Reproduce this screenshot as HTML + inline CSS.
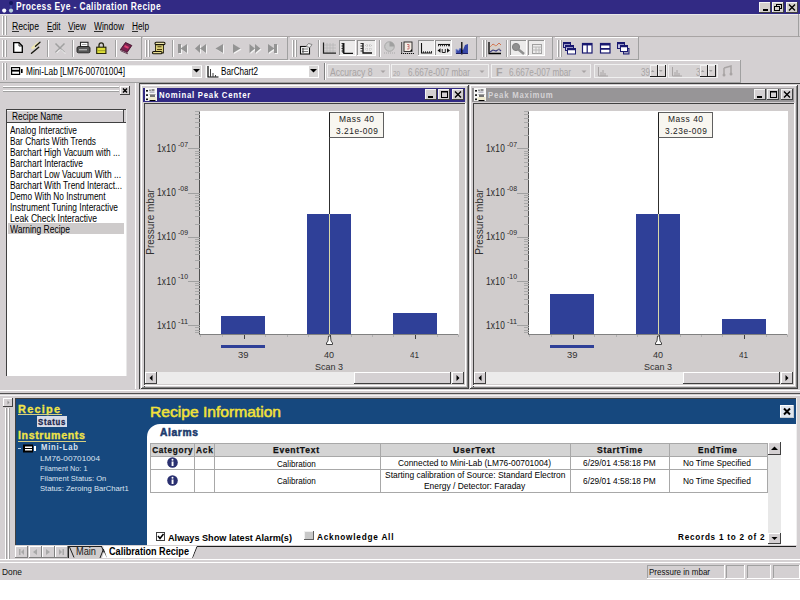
<!DOCTYPE html>
<html><head><meta charset="utf-8">
<style>
*{margin:0;padding:0;box-sizing:border-box}
html,body{width:800px;height:600px;overflow:hidden;background:#fff}
.a{position:absolute}
.t{position:absolute;white-space:nowrap;line-height:1}
</style></head><body>
<div class="a" style="left:0px;top:0px;width:800px;height:580px;background:#d4d0d2;"></div>
<div class="a" style="left:0px;top:0px;width:800px;height:14px;background:#322a84;"></div>
<svg class="a" style="left:0px;top:0px" width="15" height="14" viewBox="0 0 15 14"><circle cx="11" cy="3" r="2" fill="#141860"/><circle cx="11" cy="6.5" r="1.2" fill="#3848a0"/><circle cx="4.2" cy="10.6" r="2.1" fill="#f8f8ff"/><circle cx="11" cy="10.6" r="2.1" fill="#b8d0dc"/></svg>
<div class="t" id="t3" style="left:16px;top:2.28px;font-size:10.3px;font-weight:bold;color:#fff;font-family:'Liberation Sans',sans-serif;transform:scaleX(0.8201);transform-origin:0 0;letter-spacing:0.5px;">Process Eye - Calibration Recipe</div>
<div class="a" style="left:759px;top:2px;width:12px;height:11px;background:#d4d0cc;"></div>
<div class="a" style="left:759px;top:2px;width:12px;height:1px;background:#f4f4f4;"></div>
<div class="a" style="left:759px;top:2px;width:1px;height:11px;background:#f4f4f4;"></div>
<div class="a" style="left:759px;top:12px;width:12px;height:1px;background:#404040;"></div>
<div class="a" style="left:770px;top:2px;width:1px;height:11px;background:#404040;"></div>
<div class="a" style="left:772px;top:2px;width:12px;height:11px;background:#d4d0cc;"></div>
<div class="a" style="left:772px;top:2px;width:12px;height:1px;background:#f4f4f4;"></div>
<div class="a" style="left:772px;top:2px;width:1px;height:11px;background:#f4f4f4;"></div>
<div class="a" style="left:772px;top:12px;width:12px;height:1px;background:#404040;"></div>
<div class="a" style="left:783px;top:2px;width:1px;height:11px;background:#404040;"></div>
<div class="a" style="left:786px;top:2px;width:12px;height:11px;background:#d4d0cc;"></div>
<div class="a" style="left:786px;top:2px;width:12px;height:1px;background:#f4f4f4;"></div>
<div class="a" style="left:786px;top:2px;width:1px;height:11px;background:#f4f4f4;"></div>
<div class="a" style="left:786px;top:12px;width:12px;height:1px;background:#404040;"></div>
<div class="a" style="left:797px;top:2px;width:1px;height:11px;background:#404040;"></div>
<svg class="a" style="left:759px;top:2px" width="40" height="11" viewBox="0 0 40 11"><rect x="4" y="7" width="5" height="2" fill="#000"/><rect x="17.5" y="2.5" width="5" height="4" fill="none" stroke="#000" stroke-width="1"/><rect x="15.5" y="4.5" width="5" height="4" fill="#d4d0cc" stroke="#000" stroke-width="1"/><path d="M30 2.5 L36 8.5 M36 2.5 L30 8.5" stroke="#000" stroke-width="1.4"/></svg>
<div class="a" style="left:0px;top:14px;width:800px;height:1px;background:#e8e8e8;"></div>
<div class="a" style="left:0px;top:36px;width:800px;height:1px;background:#a8a4a4;"></div>
<div class="a" style="left:798px;top:14px;width:1px;height:23px;background:#a0a0a0;"></div>
<div class="a" style="left:2px;top:16px;width:1px;height:19px;background:#ffffff;"></div>
<div class="a" style="left:3px;top:16px;width:1px;height:19px;background:#a0a0a0;"></div>
<div class="a" style="left:5px;top:16px;width:1px;height:19px;background:#ffffff;"></div>
<div class="a" style="left:6px;top:16px;width:1px;height:19px;background:#a0a0a0;"></div>
<div class="t" id="t27" style="left:12px;top:21.93px;font-size:10px;font-weight:normal;color:#000;font-family:'Liberation Sans',sans-serif;transform:scaleX(0.8670);transform-origin:0 0;">Recipe</div>
<div class="t" id="t28" style="left:47px;top:21.93px;font-size:10px;font-weight:normal;color:#000;font-family:'Liberation Sans',sans-serif;transform:scaleX(0.7833);transform-origin:0 0;">Edit</div>
<div class="t" id="t29" style="left:68px;top:21.93px;font-size:10px;font-weight:normal;color:#000;font-family:'Liberation Sans',sans-serif;transform:scaleX(0.8372);transform-origin:0 0;">View</div>
<div class="t" id="t30" style="left:94px;top:21.93px;font-size:10px;font-weight:normal;color:#000;font-family:'Liberation Sans',sans-serif;transform:scaleX(0.8432);transform-origin:0 0;">Window</div>
<div class="t" id="t31" style="left:132px;top:21.93px;font-size:10px;font-weight:normal;color:#000;font-family:'Liberation Sans',sans-serif;transform:scaleX(0.8261);transform-origin:0 0;">Help</div>
<div class="a" style="left:12px;top:31px;width:7px;height:1px;background:#303030;"></div>
<div class="a" style="left:47px;top:31px;width:6px;height:1px;background:#303030;"></div>
<div class="a" style="left:68px;top:31px;width:6px;height:1px;background:#303030;"></div>
<div class="a" style="left:94px;top:31px;width:9px;height:1px;background:#303030;"></div>
<div class="a" style="left:132px;top:31px;width:6px;height:1px;background:#303030;"></div>
<div class="a" style="left:0px;top:37px;width:141px;height:1px;background:#ffffff;"></div>
<div class="a" style="left:0px;top:59px;width:141px;height:1px;background:#a0a0a0;"></div>
<div class="a" style="left:141px;top:37px;width:1px;height:23px;background:#a0a0a0;"></div>
<div class="a" style="left:2px;top:40px;width:1px;height:17px;background:#ffffff;"></div>
<div class="a" style="left:3px;top:40px;width:1px;height:17px;background:#a0a0a0;"></div>
<div class="a" style="left:5px;top:40px;width:1px;height:17px;background:#ffffff;"></div>
<div class="a" style="left:6px;top:40px;width:1px;height:17px;background:#a0a0a0;"></div>
<div class="a" style="left:143px;top:37px;width:144px;height:1px;background:#ffffff;"></div>
<div class="a" style="left:143px;top:59px;width:144px;height:1px;background:#a0a0a0;"></div>
<div class="a" style="left:287px;top:37px;width:1px;height:23px;background:#a0a0a0;"></div>
<div class="a" style="left:145px;top:40px;width:1px;height:17px;background:#ffffff;"></div>
<div class="a" style="left:146px;top:40px;width:1px;height:17px;background:#a0a0a0;"></div>
<div class="a" style="left:148px;top:40px;width:1px;height:17px;background:#ffffff;"></div>
<div class="a" style="left:149px;top:40px;width:1px;height:17px;background:#a0a0a0;"></div>
<div class="a" style="left:290px;top:37px;width:186px;height:1px;background:#ffffff;"></div>
<div class="a" style="left:290px;top:59px;width:186px;height:1px;background:#a0a0a0;"></div>
<div class="a" style="left:476px;top:37px;width:1px;height:23px;background:#a0a0a0;"></div>
<div class="a" style="left:292px;top:40px;width:1px;height:17px;background:#ffffff;"></div>
<div class="a" style="left:293px;top:40px;width:1px;height:17px;background:#a0a0a0;"></div>
<div class="a" style="left:295px;top:40px;width:1px;height:17px;background:#ffffff;"></div>
<div class="a" style="left:296px;top:40px;width:1px;height:17px;background:#a0a0a0;"></div>
<div class="a" style="left:480px;top:37px;width:72px;height:1px;background:#ffffff;"></div>
<div class="a" style="left:480px;top:59px;width:72px;height:1px;background:#a0a0a0;"></div>
<div class="a" style="left:552px;top:37px;width:1px;height:23px;background:#a0a0a0;"></div>
<div class="a" style="left:482px;top:40px;width:1px;height:17px;background:#ffffff;"></div>
<div class="a" style="left:483px;top:40px;width:1px;height:17px;background:#a0a0a0;"></div>
<div class="a" style="left:485px;top:40px;width:1px;height:17px;background:#ffffff;"></div>
<div class="a" style="left:486px;top:40px;width:1px;height:17px;background:#a0a0a0;"></div>
<div class="a" style="left:555px;top:37px;width:83px;height:1px;background:#ffffff;"></div>
<div class="a" style="left:555px;top:59px;width:83px;height:1px;background:#a0a0a0;"></div>
<div class="a" style="left:638px;top:37px;width:1px;height:23px;background:#a0a0a0;"></div>
<div class="a" style="left:557px;top:40px;width:1px;height:17px;background:#ffffff;"></div>
<div class="a" style="left:558px;top:40px;width:1px;height:17px;background:#a0a0a0;"></div>
<div class="a" style="left:560px;top:40px;width:1px;height:17px;background:#ffffff;"></div>
<div class="a" style="left:561px;top:40px;width:1px;height:17px;background:#a0a0a0;"></div>
<div class="a" style="left:47px;top:40px;width:1px;height:17px;background:#a0a0a0;"></div>
<div class="a" style="left:48px;top:40px;width:1px;height:17px;background:#ffffff;"></div>
<div class="a" style="left:72px;top:40px;width:1px;height:17px;background:#a0a0a0;"></div>
<div class="a" style="left:73px;top:40px;width:1px;height:17px;background:#ffffff;"></div>
<div class="a" style="left:115px;top:40px;width:1px;height:17px;background:#a0a0a0;"></div>
<div class="a" style="left:116px;top:40px;width:1px;height:17px;background:#ffffff;"></div>
<div class="a" style="left:172px;top:40px;width:1px;height:17px;background:#a0a0a0;"></div>
<div class="a" style="left:173px;top:40px;width:1px;height:17px;background:#ffffff;"></div>
<div class="a" style="left:318px;top:40px;width:1px;height:17px;background:#a0a0a0;"></div>
<div class="a" style="left:319px;top:40px;width:1px;height:17px;background:#ffffff;"></div>
<div class="a" style="left:379px;top:40px;width:1px;height:17px;background:#a0a0a0;"></div>
<div class="a" style="left:380px;top:40px;width:1px;height:17px;background:#ffffff;"></div>
<div class="a" style="left:506px;top:40px;width:1px;height:17px;background:#a0a0a0;"></div>
<div class="a" style="left:507px;top:40px;width:1px;height:17px;background:#ffffff;"></div>
<svg class="a" style="left:13px;top:42px" width="10" height="11" viewBox="0 0 10 11"><path d="M0.7 0.7 H6 L9.3 4 V10.3 H0.7Z" fill="#fff" stroke="#000" stroke-width="1.3"/><path d="M6 0.7 V4 H9.3" fill="none" stroke="#000" stroke-width="0.8"/></svg>
<svg class="a" style="left:28px;top:40px" width="16" height="16" viewBox="0 0 16 16"><path d="M4.5 8 L10 3.5" stroke="#efe6b0" stroke-width="2.6" stroke-linecap="round"/><path d="M12 2.3 L7.5 6.2" stroke="#181810" stroke-width="1.3" stroke-linecap="round"/><path d="M10.7 7.2 L3.5 13.3" stroke="#181810" stroke-width="1.4" stroke-linecap="round"/></svg>
<svg class="a" style="left:54px;top:42px" width="12" height="12" viewBox="0 0 12 12"><path d="M1.5 1.5 L10.5 10.5 M10.5 1.5 L1.5 10.5" stroke="#a0a0a0" stroke-width="1.5"/><path d="M2.5 11 L6 7.5 M7 7.5 L11 11.5" stroke="#fff" stroke-width="1"/></svg>
<svg class="a" style="left:76px;top:41px" width="15" height="13" viewBox="0 0 15 13"><rect x="4.5" y="1.3" width="7.5" height="4.5" fill="#fff" stroke="#282828" stroke-width="1.1"/><path d="M6 3.5 H10.5" stroke="#909090" stroke-width="0.8"/><path d="M1 7 Q1 5.5 3 5.5 H12 Q14 5.5 14 7 V10.5 Q14 11.8 12.5 11.8 H2.5 Q1 11.8 1 10.5Z" fill="#585858" stroke="#202020" stroke-width="0.9"/><rect x="3" y="8" width="8" height="1.4" fill="#a8a8a8"/></svg>
<svg class="a" style="left:96px;top:42px" width="11" height="12" viewBox="0 0 11 12"><path d="M3 5.5 V3.2 Q3 0.9 5.2 0.9 Q7.5 0.9 7.5 3.2 V5.5" fill="none" stroke="#282818" stroke-width="1.3"/><rect x="0.7" y="5.2" width="9.2" height="6.4" fill="#dede38" stroke="#202008" stroke-width="1.1"/><rect x="1.5" y="8" width="7.5" height="1.2" fill="#a8a828"/></svg>
<svg class="a" style="left:119px;top:41px" width="14" height="14" viewBox="0 0 14 14"><path d="M1.5 8.5 L6.5 1.5 L12.8 4.5 L8 11.5Z" fill="#7a2050" stroke="#401028" stroke-width="0.9"/><path d="M1.5 8.5 L8 11.5 L8.5 12.8 L1.8 9.8Z" fill="#f0e0f0" stroke="#401028" stroke-width="0.7"/><path d="M5.5 5 L9.5 6.8" stroke="#e04070" stroke-width="2"/></svg>
<svg class="a" style="left:151px;top:41px" width="16" height="14" viewBox="0 0 16 14"><rect x="4.5" y="2.5" width="8" height="9.5" fill="#dcd078" stroke="#282410" stroke-width="0.9"/><rect x="4" y="1.2" width="10" height="2.4" rx="1.2" fill="#f0e8a8" stroke="#181408" stroke-width="1.1"/><rect x="1.5" y="10.5" width="9.5" height="2.3" rx="1.1" fill="#e8dc90" stroke="#181408" stroke-width="1.1"/><path d="M6.5 5.8 H10.5 M6 8.5 H11" stroke="#504010" stroke-width="1.1"/></svg>
<svg class="a" style="left:178px;top:43.5px" width="101" height="11" viewBox="0 0 101 11"><g fill="#f4f4f4" transform="translate(1,1)"><rect x="0" y="0" width="3" height="9"/><path d="M9 0 V9 L2.5 4.5Z"/><path d="M22 0 V9 L17 4.5Z M28 0 V9 L22 4.5Z"/><path d="M45 0 V9 L37.5 4.5Z"/><path d="M55 0 V9 L62.5 4.5Z"/><path d="M71.5 0 V9 L77 4.5Z M77 0 V9 L82.5 4.5Z"/><path d="M90 0 V9 L96.5 4.5Z"/><rect x="96" y="0" width="3" height="9"/></g><g fill="#949494"><rect x="0" y="0" width="3" height="9"/><path d="M9 0 V9 L2.5 4.5Z"/><path d="M22 0 V9 L17 4.5Z M28 0 V9 L22 4.5Z"/><path d="M45 0 V9 L37.5 4.5Z"/><path d="M55 0 V9 L62.5 4.5Z"/><path d="M71.5 0 V9 L77 4.5Z M77 0 V9 L82.5 4.5Z"/><path d="M90 0 V9 L96.5 4.5Z"/><rect x="96" y="0" width="3" height="9"/></g></svg>
<svg class="a" style="left:299px;top:42px" width="14" height="13" viewBox="0 0 14 13"><rect x="1.5" y="4.5" width="9" height="7.5" fill="#f8f8f8" stroke="#101010" stroke-width="1.1"/><path d="M3 7 H9 M3 9.5 H9" stroke="#808080"/><path d="M4 6 V11" stroke="#404040"/><path d="M7 4.5 L9.5 1.5 L13 2.5 L11 5.5Z" fill="#f0f0f0" stroke="#707070" stroke-width="0.8"/></svg>
<svg class="a" style="left:322px;top:42px" width="15" height="12" viewBox="0 0 15 12"><g stroke="#b8b8b8" stroke-width="0.8"><path d="M2 3 H14 M2 6 H14 M2 9 H14 M5 1 V11 M8 1 V11 M11 1 V11"/></g><path d="M1.5 0.5 V11.2 H14" fill="none" stroke="#202020" stroke-width="1.2"/></svg>
<div class="a" style="left:339px;top:40px;width:17px;height:16px;background:#ecebeb;"></div>
<div class="a" style="left:339px;top:40px;width:17px;height:1px;background:#909090;"></div>
<div class="a" style="left:339px;top:40px;width:1px;height:16px;background:#909090;"></div>
<div class="a" style="left:339px;top:55px;width:17px;height:1px;background:#ffffff;"></div>
<div class="a" style="left:355px;top:40px;width:1px;height:16px;background:#ffffff;"></div>
<svg class="a" style="left:339px;top:40px" width="17" height="16" viewBox="0 0 17 16"><path d="M4.8 3 V13.3 H14" fill="none" stroke="#101010" stroke-width="1.2"/><path d="M4.3 3 V13" stroke="#101010" stroke-width="1.6"/><path d="M2.5 3.5 H5 M2.5 6 H5 M2.5 8.5 H5 M2.5 11 H5" stroke="#202020" stroke-width="0.9"/></svg>
<div class="a" style="left:357px;top:40px;width:19px;height:16px;background:#ecebeb;"></div>
<div class="a" style="left:357px;top:40px;width:19px;height:1px;background:#909090;"></div>
<div class="a" style="left:357px;top:40px;width:1px;height:16px;background:#909090;"></div>
<div class="a" style="left:357px;top:55px;width:19px;height:1px;background:#ffffff;"></div>
<div class="a" style="left:375px;top:40px;width:1px;height:16px;background:#ffffff;"></div>
<svg class="a" style="left:357px;top:40px" width="19" height="16" viewBox="0 0 19 16"><path d="M6 3 V13 H15" fill="none" stroke="#101010" stroke-width="1.3"/><path d="M3.5 3.5 H6 M3.5 6 H6 M3.5 8.5 H6 M3.5 11 H6" stroke="#202020" stroke-width="0.9"/><g stroke="#b8b8b8" stroke-width="0.8" stroke-dasharray="1 1"><path d="M8 5.5 H15 M8 9 H15 M10 4 V12 M13 4 V12"/></g></svg>
<svg class="a" style="left:383px;top:41px" width="14" height="13" viewBox="0 0 14 13"><circle cx="6.5" cy="5.5" r="4.8" fill="#c8c8c8" stroke="#a8a8a8"/><path d="M6.5 5.5 V0.7 A4.8 4.8 0 0 1 11.3 5.5Z" fill="#a0a0a0"/><path d="M1 12 H13" stroke="#a8a8a8" stroke-dasharray="1 1"/></svg>
<svg class="a" style="left:400px;top:41px" width="15" height="14" viewBox="0 0 15 14"><rect x="1" y="1" width="1.2" height="11" fill="#606060"/><rect x="4" y="1" width="8" height="9.5" fill="#f4ece4" stroke="#202020" stroke-width="0.9"/><path d="M7 3.5 H9 V5.5 H7.5 M9 5.5 V8 H7" fill="none" stroke="#c06060" stroke-width="0.8"/><path d="M10 10 L12 8 V10Z" fill="#000"/><path d="M1 12.5 H14" stroke="#101010" stroke-width="1.1" stroke-dasharray="1.2 0.8"/></svg>
<div class="a" style="left:418px;top:40px;width:17px;height:16px;background:#ecebeb;"></div>
<div class="a" style="left:418px;top:40px;width:17px;height:1px;background:#909090;"></div>
<div class="a" style="left:418px;top:40px;width:1px;height:16px;background:#909090;"></div>
<div class="a" style="left:418px;top:55px;width:17px;height:1px;background:#ffffff;"></div>
<div class="a" style="left:434px;top:40px;width:1px;height:16px;background:#ffffff;"></div>
<svg class="a" style="left:418px;top:40px" width="17" height="16" viewBox="0 0 17 16"><path d="M3.5 3 V13 H14" fill="none" stroke="#101010" stroke-width="1.1"/><path d="M5.5 13 V11.3 M7.5 13 V11.3 M9.5 13 V11.3 M11.5 13 V11.3 M13.5 13 V11" stroke="#202020" stroke-width="0.9"/></svg>
<div class="a" style="left:435px;top:40px;width:17px;height:16px;background:#ecebeb;"></div>
<div class="a" style="left:435px;top:40px;width:17px;height:1px;background:#909090;"></div>
<div class="a" style="left:435px;top:40px;width:1px;height:16px;background:#909090;"></div>
<div class="a" style="left:435px;top:55px;width:17px;height:1px;background:#ffffff;"></div>
<div class="a" style="left:451px;top:40px;width:1px;height:16px;background:#ffffff;"></div>
<svg class="a" style="left:435px;top:40px" width="17" height="16" viewBox="0 0 17 16"><path d="M3 4.5 H15" stroke="#101010" stroke-width="1.1"/><path d="M3.5 4.5 V6.3 M5.5 4.5 V6.3 M7.5 4.5 V6.3 M9.5 4.5 V6.3 M11.5 4.5 V6.3 M13.5 4.5 V6.3 M14.5 4.5 V6.3" stroke="#202020" stroke-width="0.9"/><path d="M2.5 10.5 L5.5 8.2 V12.8Z M15 10.5 L12 8.2 V12.8Z" fill="#101010"/><path d="M7.2 9 V12.5 H10.3 V9" fill="none" stroke="#101010" stroke-width="0.9"/></svg>
<svg class="a" style="left:455px;top:41px" width="14" height="14" viewBox="0 0 14 14"><path d="M1 12.5 V8 L3.5 9.5 L5 7 L8 9 L10 4 L13 3 V12.5Z" fill="#3848a8"/><path d="M1 12.5 V8 L3.5 9.5 L5 7" fill="none" stroke="#8090d0" stroke-width="0.8"/><path d="M6.8 1 V13.5" stroke="#000" stroke-width="1.3"/><path d="M1 12.5 H13" stroke="#202060" stroke-width="1"/></svg>
<svg class="a" style="left:487px;top:41px" width="15" height="14" viewBox="0 0 15 14"><path d="M2 1 V12.5 H14" fill="none" stroke="#000" stroke-width="1.3"/><path d="M3 6 L6 3 L9 5 L12 2 L14 4" fill="none" stroke="#d07050" stroke-width="1"/><path d="M3 11 L6 9 L9 10 L12 8 L14 10" fill="none" stroke="#404080" stroke-width="1.2"/><path d="M3 5 H14 M3 8 H14" stroke="#e0d0b0" stroke-width="0.6"/></svg>
<div class="a" style="left:510px;top:40px;width:17px;height:16px;background:#ecebeb;"></div>
<div class="a" style="left:510px;top:40px;width:17px;height:1px;background:#909090;"></div>
<div class="a" style="left:510px;top:40px;width:1px;height:16px;background:#909090;"></div>
<div class="a" style="left:510px;top:55px;width:17px;height:1px;background:#ffffff;"></div>
<div class="a" style="left:526px;top:40px;width:1px;height:16px;background:#ffffff;"></div>
<svg class="a" style="left:510px;top:40px" width="17" height="16" viewBox="0 0 17 16"><circle cx="6" cy="7" r="3.6" fill="#909090" stroke="#808080"/><path d="M8.5 9.5 L14 14" stroke="#909090" stroke-width="2.5"/></svg>
<div class="a" style="left:528px;top:40px;width:17px;height:16px;background:#ecebeb;"></div>
<div class="a" style="left:528px;top:40px;width:17px;height:1px;background:#909090;"></div>
<div class="a" style="left:528px;top:40px;width:1px;height:16px;background:#909090;"></div>
<div class="a" style="left:528px;top:55px;width:17px;height:1px;background:#ffffff;"></div>
<div class="a" style="left:544px;top:40px;width:1px;height:16px;background:#ffffff;"></div>
<svg class="a" style="left:528px;top:40px" width="17" height="16" viewBox="0 0 17 16"><rect x="4.5" y="4.5" width="9" height="9" fill="none" stroke="#a0a0a0"/><path d="M4.5 7 H13.5 M4.5 10 H13.5 M8 7 V13.5 M11 7 V13.5" stroke="#b8b8b8"/></svg>
<svg class="a" style="left:562px;top:41px" width="14" height="14" viewBox="0 0 14 14"><rect x="1.5" y="1.5" width="7" height="5" fill="#c0c0e0" stroke="#1a1a70"/><rect x="3.5" y="4.5" width="8" height="5" fill="#c8c8e8" stroke="#1a1a70"/><rect x="5.5" y="7.5" width="8" height="5.5" fill="#fff" stroke="#1a1a70"/><path d="M1.5 2.5 H8.5 M3.5 5.5 H11.5 M5.5 8.5 H13.5" stroke="#1a1a70" stroke-width="1.6"/></svg>
<svg class="a" style="left:581px;top:42px" width="12" height="12" viewBox="0 0 12 12"><rect x="1.5" y="1.5" width="9.5" height="9.5" fill="#fff" stroke="#1a1a70" stroke-width="1.2"/><path d="M1.5 2.5 H11" stroke="#1a1a70" stroke-width="1.8"/><path d="M6.2 1.5 V11" stroke="#1a1a70" stroke-width="1.2"/></svg>
<svg class="a" style="left:599px;top:42px" width="12" height="12" viewBox="0 0 12 12"><rect x="1.5" y="1.5" width="9.5" height="9.5" fill="#fff" stroke="#1a1a70" stroke-width="1.2"/><path d="M1.5 2.5 H11 M1.5 6.8 H11" stroke="#1a1a70" stroke-width="1.8"/></svg>
<svg class="a" style="left:616px;top:41px" width="14" height="14" viewBox="0 0 14 14"><rect x="1.5" y="1.5" width="7" height="6" fill="#c0c0e0" stroke="#1a1a70"/><rect x="7.5" y="7.5" width="5.5" height="5.5" fill="#a0a0c0" stroke="#1a1a70"/><rect x="4.5" y="4.5" width="7" height="6" fill="#fff" stroke="#1a1a70"/><path d="M1.5 2.5 H8.5 M4.5 5.5 H11.5" stroke="#1a1a70" stroke-width="1.4"/></svg>
<div class="a" style="left:0px;top:60px;width:740px;height:1px;background:#ffffff;"></div>
<div class="a" style="left:0px;top:82px;width:740px;height:1px;background:#a0a0a0;"></div>
<div class="a" style="left:740px;top:60px;width:1px;height:23px;background:#a0a0a0;"></div>
<div class="a" style="left:2px;top:63px;width:1px;height:17px;background:#ffffff;"></div>
<div class="a" style="left:3px;top:63px;width:1px;height:17px;background:#a0a0a0;"></div>
<div class="a" style="left:5px;top:63px;width:1px;height:17px;background:#ffffff;"></div>
<div class="a" style="left:6px;top:63px;width:1px;height:17px;background:#a0a0a0;"></div>
<div class="a" style="left:324px;top:63px;width:1px;height:17px;background:#808080;"></div>
<div class="a" style="left:325px;top:63px;width:1px;height:17px;background:#ffffff;"></div>
<div class="a" style="left:10px;top:65px;width:192px;height:13px;background:#fff;"></div>
<div class="a" style="left:10px;top:65px;width:192px;height:1px;background:#f0f0f0;"></div>
<div class="a" style="left:10px;top:65px;width:1px;height:13px;background:#e8e8e8;"></div>
<div class="a" style="left:192px;top:66px;width:9px;height:11px;background:#d8d6d6;"></div>
<svg class="a" style="left:192px;top:68px" width="9" height="5" viewBox="0 0 9 5"><path d="M1 1 L8 1 L4.5 4.5Z" fill="#000"/></svg>
<svg class="a" style="left:11px;top:67px" width="13" height="9" viewBox="0 0 13 9"><rect x="0.6" y="0.6" width="8" height="6.8" fill="#fff" stroke="#000" stroke-width="1.2"/><rect x="1" y="2.8" width="7.5" height="1.8" fill="#000"/><rect x="1.5" y="1.3" width="6.5" height="1" fill="#d0d0d0"/><rect x="10" y="2" width="1.6" height="4" fill="#000"/></svg>
<div class="t" id="t155" style="left:26px;top:67.44px;font-size:10px;font-weight:normal;color:#000;font-family:'Liberation Sans',sans-serif;transform:scaleX(0.8282);transform-origin:0 0;">Mini-Lab [LM76-00701004]</div>
<div class="a" style="left:205px;top:65px;width:114px;height:13px;background:#fff;"></div>
<div class="a" style="left:205px;top:65px;width:114px;height:1px;background:#f0f0f0;"></div>
<div class="a" style="left:205px;top:65px;width:1px;height:13px;background:#e8e8e8;"></div>
<div class="a" style="left:309px;top:66px;width:9px;height:11px;background:#d8d6d6;"></div>
<svg class="a" style="left:309px;top:68px" width="9" height="5" viewBox="0 0 9 5"><path d="M1 1 L8 1 L4.5 4.5Z" fill="#000"/></svg>
<svg class="a" style="left:206px;top:65px" width="13" height="13" viewBox="0 0 13 13"><path d="M2 1 V12 H12.5" stroke="#000" stroke-width="1.2" fill="none"/><path d="M4.5 12 V4 M7 12 V8 M9.5 12 V10" stroke="#404040" stroke-width="1" fill="none"/></svg>
<div class="t" id="t162" style="left:221px;top:67.44px;font-size:10px;font-weight:normal;color:#000;font-family:'Liberation Sans',sans-serif;transform:scaleX(0.8118);transform-origin:0 0;">BarChart2</div>
<div class="a" style="left:327px;top:64px;width:63px;height:14px;background:#d6d3d4;"></div>
<div class="a" style="left:327px;top:64px;width:63px;height:1px;background:#f0f0f0;"></div>
<div class="a" style="left:327px;top:64px;width:1px;height:14px;background:#f0f0f0;"></div>
<div class="a" style="left:327px;top:77px;width:63px;height:1px;background:#f0f0f0;"></div>
<div class="a" style="left:389px;top:64px;width:1px;height:14px;background:#f0f0f0;"></div>
<svg class="a" style="left:380px;top:70px" width="6" height="4" viewBox="0 0 6 4"><path d="M0.5 0.5 L5.5 0.5 L3 3Z" fill="#a8a4a4"/></svg>
<div class="t" id="t169" style="left:330px;top:67.53px;font-size:10px;font-weight:normal;color:#a8a4a4;font-family:'Liberation Sans',sans-serif;transform:scaleX(0.8591);transform-origin:0 0;">Accuracy 8</div>
<div class="a" style="left:391px;top:64px;width:98px;height:14px;background:#d6d3d4;"></div>
<div class="a" style="left:391px;top:64px;width:98px;height:1px;background:#f0f0f0;"></div>
<div class="a" style="left:391px;top:64px;width:1px;height:14px;background:#f0f0f0;"></div>
<div class="a" style="left:391px;top:77px;width:98px;height:1px;background:#f0f0f0;"></div>
<div class="a" style="left:488px;top:64px;width:1px;height:14px;background:#f0f0f0;"></div>
<svg class="a" style="left:479px;top:70px" width="6" height="4" viewBox="0 0 6 4"><path d="M0.5 0.5 L5.5 0.5 L3 3Z" fill="#a8a4a4"/></svg>
<div class="t" id="t176" style="left:393px;top:70.90px;font-size:6.5px;font-weight:normal;color:#a8a4a4;font-family:'Liberation Sans',sans-serif;transform:scaleX(0.9676);transform-origin:0 0;">20</div>
<div class="t" id="t177" style="left:407.5px;top:67.53px;font-size:10px;font-weight:normal;color:#a8a4a4;font-family:'Liberation Sans',sans-serif;transform:scaleX(0.8139);transform-origin:0 0;">6.667e-007 mbar</div>
<div class="a" style="left:491px;top:64px;width:100px;height:14px;background:#d6d3d4;"></div>
<div class="a" style="left:491px;top:64px;width:100px;height:1px;background:#f0f0f0;"></div>
<div class="a" style="left:491px;top:64px;width:1px;height:14px;background:#f0f0f0;"></div>
<div class="a" style="left:491px;top:77px;width:100px;height:1px;background:#f0f0f0;"></div>
<div class="a" style="left:590px;top:64px;width:1px;height:14px;background:#f0f0f0;"></div>
<svg class="a" style="left:581px;top:70px" width="6" height="4" viewBox="0 0 6 4"><path d="M0.5 0.5 L5.5 0.5 L3 3Z" fill="#a8a4a4"/></svg>
<div class="t" id="t184" style="left:496px;top:67.73px;font-size:10px;font-weight:bold;color:#a8a4a4;font-family:'Liberation Sans',sans-serif;transform:scaleX(1.0639);transform-origin:0 0;">F</div>
<div class="t" id="t185" style="left:508.75px;top:67.53px;font-size:10px;font-weight:normal;color:#a8a4a4;font-family:'Liberation Sans',sans-serif;transform:scaleX(0.8139);transform-origin:0 0;">6.667e-007 mbar</div>
<div class="a" style="left:594px;top:64px;width:73px;height:14px;background:#d6d3d4;"></div>
<div class="a" style="left:594px;top:64px;width:73px;height:1px;background:#f0f0f0;"></div>
<div class="a" style="left:594px;top:64px;width:1px;height:14px;background:#f0f0f0;"></div>
<div class="a" style="left:594px;top:77px;width:73px;height:1px;background:#f0f0f0;"></div>
<div class="a" style="left:666px;top:64px;width:1px;height:14px;background:#f0f0f0;"></div>
<div class="t" id="t191" style="left:640.5px;top:67.53px;font-size:10px;font-weight:normal;color:#a8a4a4;font-family:'Liberation Sans',sans-serif;transform:scaleX(0.8090);transform-origin:0 0;">39</div>
<div class="a" style="left:650px;top:65px;width:8px;height:12px;background:#d8d4d4;"></div>
<div class="a" style="left:650px;top:65px;width:8px;height:1px;background:#f0f0f0;"></div>
<div class="a" style="left:650px;top:65px;width:1px;height:12px;background:#f0f0f0;"></div>
<div class="a" style="left:650px;top:76px;width:8px;height:1px;background:#202020;"></div>
<div class="a" style="left:657px;top:65px;width:1px;height:12px;background:#202020;"></div>
<div class="a" style="left:658px;top:65px;width:8px;height:12px;background:#d8d4d4;"></div>
<div class="a" style="left:658px;top:65px;width:8px;height:1px;background:#f0f0f0;"></div>
<div class="a" style="left:658px;top:65px;width:1px;height:12px;background:#f0f0f0;"></div>
<div class="a" style="left:658px;top:76px;width:8px;height:1px;background:#202020;"></div>
<div class="a" style="left:665px;top:65px;width:1px;height:12px;background:#202020;"></div>
<div class="a" style="left:668px;top:64px;width:50px;height:14px;background:#d6d3d4;"></div>
<div class="a" style="left:668px;top:64px;width:50px;height:1px;background:#f0f0f0;"></div>
<div class="a" style="left:668px;top:64px;width:1px;height:14px;background:#f0f0f0;"></div>
<div class="a" style="left:668px;top:77px;width:50px;height:1px;background:#f0f0f0;"></div>
<div class="a" style="left:717px;top:64px;width:1px;height:14px;background:#f0f0f0;"></div>
<div class="t" id="t207" style="left:695.75px;top:67.53px;font-size:10px;font-weight:normal;color:#a8a4a4;font-family:'Liberation Sans',sans-serif;transform:scaleX(0.8090);transform-origin:0 0;">3</div>
<div class="a" style="left:700px;top:65px;width:8px;height:12px;background:#d8d4d4;"></div>
<div class="a" style="left:700px;top:65px;width:8px;height:1px;background:#f0f0f0;"></div>
<div class="a" style="left:700px;top:65px;width:1px;height:12px;background:#f0f0f0;"></div>
<div class="a" style="left:700px;top:76px;width:8px;height:1px;background:#202020;"></div>
<div class="a" style="left:707px;top:65px;width:1px;height:12px;background:#202020;"></div>
<div class="a" style="left:708px;top:65px;width:8px;height:12px;background:#d8d4d4;"></div>
<div class="a" style="left:708px;top:65px;width:8px;height:1px;background:#f0f0f0;"></div>
<div class="a" style="left:708px;top:65px;width:1px;height:12px;background:#f0f0f0;"></div>
<div class="a" style="left:708px;top:76px;width:8px;height:1px;background:#202020;"></div>
<div class="a" style="left:715px;top:65px;width:1px;height:12px;background:#202020;"></div>
<svg class="a" style="left:650px;top:65px" width="66" height="12" viewBox="0 0 66 12"><g fill="#a0a0a0"><path d="M2.5 5 L4.5 7 H1Z"/><path d="M10.5 6 L12.5 8 H9Z" transform="rotate(180 10.75 6.5)"/><path d="M52.5 5 L54.5 7 H51Z"/><path d="M60.5 6 L62.5 8 H59Z" transform="rotate(180 60.75 6.5)"/></g></svg>
<svg class="a" style="left:597px;top:66px" width="12" height="11" viewBox="0 0 12 11"><path d="M1.5 1 V10 H11 M4 10 V6 M6 10 V4 M8 10 V7" stroke="#a8a4a4" fill="none"/></svg>
<svg class="a" style="left:671px;top:66px" width="12" height="11" viewBox="0 0 12 11"><path d="M1.5 1 V10 H11 M4 10 V6 M6 10 V4 M8 10 V7" stroke="#a8a4a4" fill="none"/></svg>
<svg class="a" style="left:721px;top:65px" width="12" height="12" viewBox="0 0 12 12"><path d="M3 3 L10 1 V9 M3 3 V10" stroke="#a8a4a4" stroke-width="1.5" fill="none"/><circle cx="3" cy="10" r="1.5" fill="#a8a4a4"/><circle cx="10" cy="9" r="1.5" fill="#a8a4a4"/></svg>
<div class="a" style="left:0px;top:83px;width:137px;height:309px;background:#d4d0d2;"></div>
<div class="a" style="left:3px;top:86px;width:116px;height:1px;background:#ffffff;"></div>
<div class="a" style="left:3px;top:87px;width:116px;height:1px;background:#a0a0a0;"></div>
<div class="a" style="left:3px;top:90px;width:116px;height:1px;background:#ffffff;"></div>
<div class="a" style="left:3px;top:91px;width:116px;height:1px;background:#a0a0a0;"></div>
<div class="a" style="left:120px;top:86px;width:10px;height:9px;background:#d4d0d2;"></div>
<div class="a" style="left:120px;top:86px;width:10px;height:1px;background:#ffffff;"></div>
<div class="a" style="left:120px;top:86px;width:1px;height:9px;background:#ffffff;"></div>
<div class="a" style="left:120px;top:94px;width:10px;height:1px;background:#404040;"></div>
<div class="a" style="left:129px;top:86px;width:1px;height:9px;background:#404040;"></div>
<svg class="a" style="left:120px;top:86px" width="10" height="9" viewBox="0 0 10 9"><path d="M3 2.5 L7 6.5 M7 2.5 L3 6.5" stroke="#000" stroke-width="1.5"/></svg>
<div class="a" style="left:135px;top:83px;width:1px;height:309px;background:#ffffff;"></div>
<div class="a" style="left:6px;top:109px;width:121px;height:267px;background:#fff;"></div>
<div class="a" style="left:6px;top:109px;width:121px;height:1px;background:#404040;"></div>
<div class="a" style="left:6px;top:109px;width:1px;height:267px;background:#404040;"></div>
<div class="a" style="left:126px;top:109px;width:1px;height:267px;background:#e8e8e8;"></div>
<div class="a" style="left:7px;top:110px;width:119px;height:13px;background:#d4d0d2;"></div>
<div class="a" style="left:7px;top:110px;width:117px;height:1px;background:#ffffff;"></div>
<div class="a" style="left:7px;top:122px;width:119px;height:1px;background:#404040;"></div>
<div class="a" style="left:123px;top:110px;width:1px;height:13px;background:#404040;"></div>
<div class="t" id="t242" style="left:12px;top:111.84px;font-size:10px;font-weight:normal;color:#000;font-family:'Liberation Sans',sans-serif;transform:scaleX(0.8334);transform-origin:0 0;">Recipe Name</div>
<div class="a" style="left:8px;top:223px;width:116px;height:11px;background:#cecbcb;"></div>
<div class="t" id="t244" style="left:10px;top:125.53px;font-size:10px;font-weight:normal;color:#000;font-family:'Liberation Sans',sans-serif;transform:scaleX(0.8368);transform-origin:0 0;">Analog Interactive</div>
<div class="t" id="t245" style="left:10px;top:136.53px;font-size:10px;font-weight:normal;color:#000;font-family:'Liberation Sans',sans-serif;transform:scaleX(0.8275);transform-origin:0 0;">Bar Charts With Trends</div>
<div class="t" id="t246" style="left:10px;top:147.53px;font-size:10px;font-weight:normal;color:#000;font-family:'Liberation Sans',sans-serif;transform:scaleX(0.8362);transform-origin:0 0;">Barchart High Vacuum with ...</div>
<div class="t" id="t247" style="left:10px;top:158.53px;font-size:10px;font-weight:normal;color:#000;font-family:'Liberation Sans',sans-serif;transform:scaleX(0.8418);transform-origin:0 0;">Barchart Interactive</div>
<div class="t" id="t248" style="left:10px;top:169.53px;font-size:10px;font-weight:normal;color:#000;font-family:'Liberation Sans',sans-serif;transform:scaleX(0.8439);transform-origin:0 0;">Barchart Low Vacuum With ...</div>
<div class="t" id="t249" style="left:10px;top:180.53px;font-size:10px;font-weight:normal;color:#000;font-family:'Liberation Sans',sans-serif;transform:scaleX(0.8396);transform-origin:0 0;">Barchart With Trend Interact...</div>
<div class="t" id="t250" style="left:10px;top:191.53px;font-size:10px;font-weight:normal;color:#000;font-family:'Liberation Sans',sans-serif;transform:scaleX(0.8301);transform-origin:0 0;">Demo With No Instrument</div>
<div class="t" id="t251" style="left:10px;top:202.53px;font-size:10px;font-weight:normal;color:#000;font-family:'Liberation Sans',sans-serif;transform:scaleX(0.8374);transform-origin:0 0;">Instrument Tuning Interactive</div>
<div class="t" id="t252" style="left:10px;top:213.53px;font-size:10px;font-weight:normal;color:#000;font-family:'Liberation Sans',sans-serif;transform:scaleX(0.8553);transform-origin:0 0;">Leak Check Interactive</div>
<div class="t" id="t253" style="left:10px;top:224.53px;font-size:10px;font-weight:normal;color:#000;font-family:'Liberation Sans',sans-serif;transform:scaleX(0.8477);transform-origin:0 0;">Warning Recipe</div>
<div class="a" style="left:139px;top:83px;width:661px;height:309px;background:#d4d0d2;"></div>
<div class="a" style="left:139px;top:83px;width:661px;height:1px;background:#404040;"></div>
<div class="a" style="left:139px;top:83px;width:1px;height:309px;background:#404040;"></div>
<div class="a" style="left:141px;top:85px;width:328px;height:304px;background:#d4d0d2;"></div>
<div class="a" style="left:141px;top:85px;width:328px;height:1px;background:#ffffff;"></div>
<div class="a" style="left:141px;top:85px;width:1px;height:304px;background:#ffffff;"></div>
<div class="a" style="left:468px;top:85px;width:1px;height:304px;background:#404040;"></div>
<div class="a" style="left:141px;top:388px;width:328px;height:1px;background:#404040;"></div>
<div class="a" style="left:467px;top:86px;width:1px;height:302px;background:#808080;"></div>
<div class="a" style="left:142px;top:387px;width:326px;height:1px;background:#808080;"></div>
<div class="a" style="left:143px;top:88px;width:322px;height:14px;background:#322a84;"></div>
<svg class="a" style="left:145px;top:88px" width="12" height="13" viewBox="0 0 12 13"><rect x="0" y="0" width="12" height="13" fill="#f8f8f8"/><rect x="1" y="2" width="2" height="1.6" fill="#101010"/><rect x="1" y="6.3" width="2" height="1.6" fill="#101010"/><rect x="1" y="10.5" width="2" height="1.6" fill="#101010"/><rect x="4.5" y="1.5" width="1" height="1.5" fill="#303030"/><rect x="6.5" y="1.5" width="3" height="1" fill="#202020"/><rect x="4.5" y="3.5" width="5" height="1.2" fill="#a0a0b0"/><rect x="4.5" y="6" width="6" height="1" fill="#a0a0a0"/><rect x="5" y="7.4" width="5" height="1.2" fill="#202020"/><rect x="3.5" y="9" width="8" height="3" fill="#f0ecd0"/><rect x="4.5" y="12" width="6" height="1" fill="#000"/></svg>
<div class="t" id="t266" style="left:159px;top:90.61px;font-size:9.2px;font-weight:bold;color:#fff;font-family:'Liberation Sans',sans-serif;transform:scaleX(0.8439);transform-origin:0 0;letter-spacing:0.9px;">Nominal Peak Center</div>
<div class="a" style="left:425px;top:89px;width:12px;height:11px;background:#d4d0d2;"></div>
<div class="a" style="left:425px;top:89px;width:12px;height:1px;background:#f4f4f4;"></div>
<div class="a" style="left:425px;top:89px;width:1px;height:11px;background:#f4f4f4;"></div>
<div class="a" style="left:425px;top:99px;width:12px;height:1px;background:#404040;"></div>
<div class="a" style="left:436px;top:89px;width:1px;height:11px;background:#404040;"></div>
<div class="a" style="left:438px;top:89px;width:12px;height:11px;background:#d4d0d2;"></div>
<div class="a" style="left:438px;top:89px;width:12px;height:1px;background:#f4f4f4;"></div>
<div class="a" style="left:438px;top:89px;width:1px;height:11px;background:#f4f4f4;"></div>
<div class="a" style="left:438px;top:99px;width:12px;height:1px;background:#404040;"></div>
<div class="a" style="left:449px;top:89px;width:1px;height:11px;background:#404040;"></div>
<div class="a" style="left:452px;top:89px;width:12px;height:11px;background:#d4d0d2;"></div>
<div class="a" style="left:452px;top:89px;width:12px;height:1px;background:#f4f4f4;"></div>
<div class="a" style="left:452px;top:89px;width:1px;height:11px;background:#f4f4f4;"></div>
<div class="a" style="left:452px;top:99px;width:12px;height:1px;background:#404040;"></div>
<div class="a" style="left:463px;top:89px;width:1px;height:11px;background:#404040;"></div>
<svg class="a" style="left:425px;top:89px" width="40" height="11" viewBox="0 0 40 11"><rect x="3" y="7" width="5" height="2" fill="#000"/><rect x="16.5" y="2.5" width="6" height="6" fill="none" stroke="#000"/><rect x="16" y="2" width="7" height="1.5" fill="#000"/><path d="M30 2.5 L36 8.5 M36 2.5 L30 8.5" stroke="#000" stroke-width="1.4"/></svg>
<div class="a" style="left:144px;top:103px;width:321px;height:1px;background:#404040;"></div>
<div class="a" style="left:144px;top:103px;width:1px;height:284px;background:#404040;"></div>
<div class="a" style="left:145px;top:104px;width:320px;height:281px;background:#d0cccc;"></div>
<div class="a" style="left:465px;top:103px;width:1px;height:283px;background:#ffffff;"></div>
<div class="a" style="left:144px;top:385px;width:322px;height:1px;background:#ffffff;"></div>
<div class="a" style="left:200px;top:111px;width:259px;height:223px;background:#fff;"></div>
<div class="a" style="left:199px;top:111px;width:1px;height:224px;background:#505050;"></div>
<div class="a" style="left:199px;top:334px;width:259px;height:1px;background:#808080;"></div>
<div class="a" style="left:188px;top:148px;width:12px;height:1px;background:#a0a0a0;"></div>
<div class="t" id="t292" style="left:157px;top:143.90px;font-size:10.4px;font-weight:normal;color:#282828;font-family:'Liberation Sans',sans-serif;transform:scaleX(0.8005);transform-origin:0 0;letter-spacing:0.3px;">1x10</div>
<div class="t" id="t293" style="left:178px;top:140.83px;font-size:8px;font-weight:normal;color:#282828;font-family:'Liberation Sans',sans-serif;transform:scaleX(0.8649);transform-origin:0 0;">-07</div>
<div class="a" style="left:188px;top:193px;width:12px;height:1px;background:#a0a0a0;"></div>
<div class="t" id="t295" style="left:157px;top:188.10px;font-size:10.4px;font-weight:normal;color:#282828;font-family:'Liberation Sans',sans-serif;transform:scaleX(0.8005);transform-origin:0 0;letter-spacing:0.3px;">1x10</div>
<div class="t" id="t296" style="left:178px;top:185.03px;font-size:8px;font-weight:normal;color:#282828;font-family:'Liberation Sans',sans-serif;transform:scaleX(0.8649);transform-origin:0 0;">-08</div>
<div class="a" style="left:188px;top:237px;width:12px;height:1px;background:#a0a0a0;"></div>
<div class="t" id="t298" style="left:157px;top:232.30px;font-size:10.4px;font-weight:normal;color:#282828;font-family:'Liberation Sans',sans-serif;transform:scaleX(0.8005);transform-origin:0 0;letter-spacing:0.3px;">1x10</div>
<div class="t" id="t299" style="left:178px;top:229.23px;font-size:8px;font-weight:normal;color:#282828;font-family:'Liberation Sans',sans-serif;transform:scaleX(0.8649);transform-origin:0 0;">-09</div>
<div class="a" style="left:188px;top:281px;width:12px;height:1px;background:#a0a0a0;"></div>
<div class="t" id="t301" style="left:157px;top:276.50px;font-size:10.4px;font-weight:normal;color:#282828;font-family:'Liberation Sans',sans-serif;transform:scaleX(0.8005);transform-origin:0 0;letter-spacing:0.3px;">1x10</div>
<div class="t" id="t302" style="left:178px;top:273.43px;font-size:8px;font-weight:normal;color:#282828;font-family:'Liberation Sans',sans-serif;transform:scaleX(0.8649);transform-origin:0 0;">-10</div>
<div class="a" style="left:188px;top:325px;width:12px;height:1px;background:#a0a0a0;"></div>
<div class="t" id="t304" style="left:157px;top:320.70px;font-size:10.4px;font-weight:normal;color:#282828;font-family:'Liberation Sans',sans-serif;transform:scaleX(0.8005);transform-origin:0 0;letter-spacing:0.3px;">1x10</div>
<div class="t" id="t305" style="left:178px;top:317.63px;font-size:8px;font-weight:normal;color:#282828;font-family:'Liberation Sans',sans-serif;transform:scaleX(0.9117);transform-origin:0 0;">-11</div>
<div class="a" style="left:195px;top:135px;width:5px;height:1px;background:#a8a8a8;"></div>
<div class="a" style="left:195px;top:127px;width:5px;height:1px;background:#a8a8a8;"></div>
<div class="a" style="left:195px;top:122px;width:5px;height:1px;background:#a8a8a8;"></div>
<div class="a" style="left:195px;top:118px;width:5px;height:1px;background:#a8a8a8;"></div>
<div class="a" style="left:195px;top:114px;width:5px;height:1px;background:#a8a8a8;"></div>
<div class="a" style="left:195px;top:111px;width:5px;height:1px;background:#a8a8a8;"></div>
<div class="a" style="left:195px;top:179px;width:5px;height:1px;background:#a8a8a8;"></div>
<div class="a" style="left:195px;top:172px;width:5px;height:1px;background:#a8a8a8;"></div>
<div class="a" style="left:195px;top:166px;width:5px;height:1px;background:#a8a8a8;"></div>
<div class="a" style="left:195px;top:162px;width:5px;height:1px;background:#a8a8a8;"></div>
<div class="a" style="left:195px;top:158px;width:5px;height:1px;background:#a8a8a8;"></div>
<div class="a" style="left:195px;top:155px;width:5px;height:1px;background:#a8a8a8;"></div>
<div class="a" style="left:195px;top:153px;width:5px;height:1px;background:#a8a8a8;"></div>
<div class="a" style="left:195px;top:151px;width:5px;height:1px;background:#a8a8a8;"></div>
<div class="a" style="left:195px;top:224px;width:5px;height:1px;background:#a8a8a8;"></div>
<div class="a" style="left:195px;top:216px;width:5px;height:1px;background:#a8a8a8;"></div>
<div class="a" style="left:195px;top:210px;width:5px;height:1px;background:#a8a8a8;"></div>
<div class="a" style="left:195px;top:206px;width:5px;height:1px;background:#a8a8a8;"></div>
<div class="a" style="left:195px;top:203px;width:5px;height:1px;background:#a8a8a8;"></div>
<div class="a" style="left:195px;top:200px;width:5px;height:1px;background:#a8a8a8;"></div>
<div class="a" style="left:195px;top:197px;width:5px;height:1px;background:#a8a8a8;"></div>
<div class="a" style="left:195px;top:195px;width:5px;height:1px;background:#a8a8a8;"></div>
<div class="a" style="left:195px;top:268px;width:5px;height:1px;background:#a8a8a8;"></div>
<div class="a" style="left:195px;top:260px;width:5px;height:1px;background:#a8a8a8;"></div>
<div class="a" style="left:195px;top:254px;width:5px;height:1px;background:#a8a8a8;"></div>
<div class="a" style="left:195px;top:250px;width:5px;height:1px;background:#a8a8a8;"></div>
<div class="a" style="left:195px;top:247px;width:5px;height:1px;background:#a8a8a8;"></div>
<div class="a" style="left:195px;top:244px;width:5px;height:1px;background:#a8a8a8;"></div>
<div class="a" style="left:195px;top:241px;width:5px;height:1px;background:#a8a8a8;"></div>
<div class="a" style="left:195px;top:239px;width:5px;height:1px;background:#a8a8a8;"></div>
<div class="a" style="left:195px;top:312px;width:5px;height:1px;background:#a8a8a8;"></div>
<div class="a" style="left:195px;top:304px;width:5px;height:1px;background:#a8a8a8;"></div>
<div class="a" style="left:195px;top:299px;width:5px;height:1px;background:#a8a8a8;"></div>
<div class="a" style="left:195px;top:294px;width:5px;height:1px;background:#a8a8a8;"></div>
<div class="a" style="left:195px;top:291px;width:5px;height:1px;background:#a8a8a8;"></div>
<div class="a" style="left:195px;top:288px;width:5px;height:1px;background:#a8a8a8;"></div>
<div class="a" style="left:195px;top:285px;width:5px;height:1px;background:#a8a8a8;"></div>
<div class="a" style="left:195px;top:283px;width:5px;height:1px;background:#a8a8a8;"></div>
<div class="a" style="left:195px;top:332px;width:5px;height:1px;background:#a8a8a8;"></div>
<div class="a" style="left:195px;top:330px;width:5px;height:1px;background:#a8a8a8;"></div>
<div class="a" style="left:195px;top:327px;width:5px;height:1px;background:#a8a8a8;"></div>
<div class="t" style="left:150.8px;top:221.8px;font-size:10px;color:#303030;font-family:'Liberation Sans',sans-serif;transform:translate(-50%,-50%) rotate(-90deg);transform-origin:center">Pressure mbar</div>
<div class="a" style="left:221.3px;top:316px;width:44.099999999999966px;height:18px;background:#2f4098;"></div>
<div class="a" style="left:307px;top:214px;width:44.30000000000001px;height:120px;background:#2f4098;"></div>
<div class="a" style="left:392.7px;top:313px;width:44.30000000000001px;height:21px;background:#2f4098;"></div>
<div class="a" style="left:244px;top:335px;width:1px;height:4px;background:#404040;"></div>
<div class="a" style="left:330px;top:335px;width:1px;height:4px;background:#404040;"></div>
<div class="a" style="left:415px;top:335px;width:1px;height:4px;background:#404040;"></div>
<div class="a" style="left:200px;top:335px;width:1px;height:2px;background:#b0b0b0;"></div>
<div class="a" style="left:222px;top:335px;width:1px;height:2px;background:#b0b0b0;"></div>
<div class="a" style="left:265px;top:335px;width:1px;height:2px;background:#b0b0b0;"></div>
<div class="a" style="left:287px;top:335px;width:1px;height:2px;background:#b0b0b0;"></div>
<div class="a" style="left:308px;top:335px;width:1px;height:2px;background:#b0b0b0;"></div>
<div class="a" style="left:351px;top:335px;width:1px;height:2px;background:#b0b0b0;"></div>
<div class="a" style="left:372px;top:335px;width:1px;height:2px;background:#b0b0b0;"></div>
<div class="a" style="left:393px;top:335px;width:1px;height:2px;background:#b0b0b0;"></div>
<div class="a" style="left:437px;top:335px;width:1px;height:2px;background:#b0b0b0;"></div>
<div class="a" style="left:458px;top:335px;width:1px;height:2px;background:#b0b0b0;"></div>
<div class="a" style="left:221px;top:345px;width:44px;height:3px;background:#2f4098;"></div>
<div class="t" id="t365" style="left:238px;top:350.78px;font-size:9px;font-weight:normal;color:#303030;font-family:'Liberation Sans',sans-serif;transform:scaleX(1.0484);transform-origin:0 0;">39</div>
<div class="t" id="t366" style="left:324px;top:350.78px;font-size:9px;font-weight:normal;color:#303030;font-family:'Liberation Sans',sans-serif;">40</div>
<div class="t" id="t367" style="left:409.8px;top:350.78px;font-size:9px;font-weight:normal;color:#303030;font-family:'Liberation Sans',sans-serif;transform:scaleX(0.8986);transform-origin:0 0;">41</div>
<div class="t" id="t368" style="left:315px;top:362.98px;font-size:9px;font-weight:normal;color:#303030;font-family:'Liberation Sans',sans-serif;">Scan 3</div>
<div class="a" style="left:329px;top:112px;width:1px;height:102px;background:#303030;"></div>
<div class="a" style="left:329px;top:214px;width:1px;height:120px;background:#d8d8a8;"></div>
<svg class="a" style="left:326px;top:335px" width="8" height="11" viewBox="0 0 8 11"><path d="M2.5 1 H4.5 L5 6 L6.5 8 V9.5 H0.5 V8 L2 6Z" fill="#fff" stroke="#303030" stroke-width="0.9"/></svg>
<div class="a" style="left:329px;top:112px;width:55px;height:26px;background:#f8f6f0;border:1px solid #606060;border-left:1px solid #202020"></div>
<div class="t" id="t373" style="left:338.75px;top:114.53px;font-size:9.3px;font-weight:normal;color:#202020;font-family:'Liberation Sans',sans-serif;transform:scaleX(0.9048);transform-origin:0 0;letter-spacing:0.6px;">Mass 40</div>
<div class="t" id="t374" style="left:335.6px;top:126.53px;font-size:9.3px;font-weight:normal;color:#202020;font-family:'Liberation Sans',sans-serif;transform:scaleX(0.8968);transform-origin:0 0;letter-spacing:0.6px;">3.21e-009</div>
<div class="a" style="left:145px;top:372px;width:319px;height:12px;background:#ecebeb;"></div>
<div class="a" style="left:145px;top:372px;width:12px;height:12px;background:#d4d0d2;"></div>
<div class="a" style="left:145px;top:372px;width:12px;height:1px;background:#ffffff;"></div>
<div class="a" style="left:145px;top:372px;width:1px;height:12px;background:#ffffff;"></div>
<div class="a" style="left:145px;top:383px;width:12px;height:1px;background:#404040;"></div>
<div class="a" style="left:156px;top:372px;width:1px;height:12px;background:#404040;"></div>
<div class="a" style="left:452px;top:372px;width:12px;height:12px;background:#d4d0d2;"></div>
<div class="a" style="left:452px;top:372px;width:12px;height:1px;background:#ffffff;"></div>
<div class="a" style="left:452px;top:372px;width:1px;height:12px;background:#ffffff;"></div>
<div class="a" style="left:452px;top:383px;width:12px;height:1px;background:#404040;"></div>
<div class="a" style="left:463px;top:372px;width:1px;height:12px;background:#404040;"></div>
<div class="a" style="left:354px;top:372px;width:97px;height:12px;background:#d4d0d2;"></div>
<div class="a" style="left:354px;top:372px;width:97px;height:1px;background:#ffffff;"></div>
<div class="a" style="left:354px;top:372px;width:1px;height:12px;background:#ffffff;"></div>
<div class="a" style="left:354px;top:383px;width:97px;height:1px;background:#404040;"></div>
<div class="a" style="left:450px;top:372px;width:1px;height:12px;background:#404040;"></div>
<svg class="a" style="left:145px;top:372px" width="12" height="12" viewBox="0 0 12 12"><path d="M7.5 3 V9 L4.5 6Z" fill="#000"/></svg>
<svg class="a" style="left:452px;top:372px" width="12" height="12" viewBox="0 0 12 12"><path d="M4.5 3 V9 L7.5 6Z" fill="#000"/></svg>
<div class="a" style="left:470px;top:85px;width:328px;height:304px;background:#d4d0d2;"></div>
<div class="a" style="left:470px;top:85px;width:328px;height:1px;background:#ffffff;"></div>
<div class="a" style="left:470px;top:85px;width:1px;height:304px;background:#ffffff;"></div>
<div class="a" style="left:797px;top:85px;width:1px;height:304px;background:#404040;"></div>
<div class="a" style="left:470px;top:388px;width:328px;height:1px;background:#404040;"></div>
<div class="a" style="left:796px;top:86px;width:1px;height:302px;background:#808080;"></div>
<div class="a" style="left:471px;top:387px;width:326px;height:1px;background:#808080;"></div>
<div class="a" style="left:472px;top:88px;width:322px;height:14px;background:#979597;"></div>
<svg class="a" style="left:474px;top:88px" width="12" height="13" viewBox="0 0 12 13"><rect x="0" y="0" width="12" height="13" fill="#f8f8f8"/><rect x="1" y="2" width="2" height="1.6" fill="#101010"/><rect x="1" y="6.3" width="2" height="1.6" fill="#101010"/><rect x="1" y="10.5" width="2" height="1.6" fill="#101010"/><rect x="4.5" y="1.5" width="1" height="1.5" fill="#303030"/><rect x="6.5" y="1.5" width="3" height="1" fill="#202020"/><rect x="4.5" y="3.5" width="5" height="1.2" fill="#a0a0b0"/><rect x="4.5" y="6" width="6" height="1" fill="#a0a0a0"/><rect x="5" y="7.4" width="5" height="1.2" fill="#202020"/><rect x="3.5" y="9" width="8" height="3" fill="#f0ecd0"/><rect x="4.5" y="12" width="6" height="1" fill="#000"/></svg>
<div class="t" id="t402" style="left:488px;top:90.61px;font-size:9.2px;font-weight:bold;color:#d4d2d4;font-family:'Liberation Sans',sans-serif;transform:scaleX(0.8486);transform-origin:0 0;letter-spacing:0.9px;">Peak Maximum</div>
<div class="a" style="left:754px;top:89px;width:12px;height:11px;background:#d4d0d2;"></div>
<div class="a" style="left:754px;top:89px;width:12px;height:1px;background:#f4f4f4;"></div>
<div class="a" style="left:754px;top:89px;width:1px;height:11px;background:#f4f4f4;"></div>
<div class="a" style="left:754px;top:99px;width:12px;height:1px;background:#404040;"></div>
<div class="a" style="left:765px;top:89px;width:1px;height:11px;background:#404040;"></div>
<div class="a" style="left:767px;top:89px;width:12px;height:11px;background:#d4d0d2;"></div>
<div class="a" style="left:767px;top:89px;width:12px;height:1px;background:#f4f4f4;"></div>
<div class="a" style="left:767px;top:89px;width:1px;height:11px;background:#f4f4f4;"></div>
<div class="a" style="left:767px;top:99px;width:12px;height:1px;background:#404040;"></div>
<div class="a" style="left:778px;top:89px;width:1px;height:11px;background:#404040;"></div>
<div class="a" style="left:781px;top:89px;width:12px;height:11px;background:#d4d0d2;"></div>
<div class="a" style="left:781px;top:89px;width:12px;height:1px;background:#f4f4f4;"></div>
<div class="a" style="left:781px;top:89px;width:1px;height:11px;background:#f4f4f4;"></div>
<div class="a" style="left:781px;top:99px;width:12px;height:1px;background:#404040;"></div>
<div class="a" style="left:792px;top:89px;width:1px;height:11px;background:#404040;"></div>
<svg class="a" style="left:754px;top:89px" width="40" height="11" viewBox="0 0 40 11"><rect x="3" y="7" width="5" height="2" fill="#000"/><rect x="16.5" y="2.5" width="6" height="6" fill="none" stroke="#000"/><rect x="16" y="2" width="7" height="1.5" fill="#000"/><path d="M30 2.5 L36 8.5 M36 2.5 L30 8.5" stroke="#000" stroke-width="1.4"/></svg>
<div class="a" style="left:473px;top:103px;width:321px;height:1px;background:#404040;"></div>
<div class="a" style="left:473px;top:103px;width:1px;height:284px;background:#404040;"></div>
<div class="a" style="left:474px;top:104px;width:320px;height:281px;background:#d0cccc;"></div>
<div class="a" style="left:794px;top:103px;width:1px;height:283px;background:#ffffff;"></div>
<div class="a" style="left:473px;top:385px;width:322px;height:1px;background:#ffffff;"></div>
<div class="a" style="left:529px;top:111px;width:259px;height:223px;background:#fff;"></div>
<div class="a" style="left:528px;top:111px;width:1px;height:224px;background:#505050;"></div>
<div class="a" style="left:528px;top:334px;width:259px;height:1px;background:#808080;"></div>
<div class="a" style="left:517px;top:148px;width:12px;height:1px;background:#a0a0a0;"></div>
<div class="t" id="t428" style="left:486px;top:143.90px;font-size:10.4px;font-weight:normal;color:#282828;font-family:'Liberation Sans',sans-serif;transform:scaleX(0.8005);transform-origin:0 0;letter-spacing:0.3px;">1x10</div>
<div class="t" id="t429" style="left:507px;top:140.83px;font-size:8px;font-weight:normal;color:#282828;font-family:'Liberation Sans',sans-serif;transform:scaleX(0.8649);transform-origin:0 0;">-07</div>
<div class="a" style="left:517px;top:193px;width:12px;height:1px;background:#a0a0a0;"></div>
<div class="t" id="t431" style="left:486px;top:188.10px;font-size:10.4px;font-weight:normal;color:#282828;font-family:'Liberation Sans',sans-serif;transform:scaleX(0.8005);transform-origin:0 0;letter-spacing:0.3px;">1x10</div>
<div class="t" id="t432" style="left:507px;top:185.03px;font-size:8px;font-weight:normal;color:#282828;font-family:'Liberation Sans',sans-serif;transform:scaleX(0.8649);transform-origin:0 0;">-08</div>
<div class="a" style="left:517px;top:237px;width:12px;height:1px;background:#a0a0a0;"></div>
<div class="t" id="t434" style="left:486px;top:232.30px;font-size:10.4px;font-weight:normal;color:#282828;font-family:'Liberation Sans',sans-serif;transform:scaleX(0.8005);transform-origin:0 0;letter-spacing:0.3px;">1x10</div>
<div class="t" id="t435" style="left:507px;top:229.23px;font-size:8px;font-weight:normal;color:#282828;font-family:'Liberation Sans',sans-serif;transform:scaleX(0.8649);transform-origin:0 0;">-09</div>
<div class="a" style="left:517px;top:281px;width:12px;height:1px;background:#a0a0a0;"></div>
<div class="t" id="t437" style="left:486px;top:276.50px;font-size:10.4px;font-weight:normal;color:#282828;font-family:'Liberation Sans',sans-serif;transform:scaleX(0.8005);transform-origin:0 0;letter-spacing:0.3px;">1x10</div>
<div class="t" id="t438" style="left:507px;top:273.43px;font-size:8px;font-weight:normal;color:#282828;font-family:'Liberation Sans',sans-serif;transform:scaleX(0.8649);transform-origin:0 0;">-10</div>
<div class="a" style="left:517px;top:325px;width:12px;height:1px;background:#a0a0a0;"></div>
<div class="t" id="t440" style="left:486px;top:320.70px;font-size:10.4px;font-weight:normal;color:#282828;font-family:'Liberation Sans',sans-serif;transform:scaleX(0.8005);transform-origin:0 0;letter-spacing:0.3px;">1x10</div>
<div class="t" id="t441" style="left:507px;top:317.63px;font-size:8px;font-weight:normal;color:#282828;font-family:'Liberation Sans',sans-serif;transform:scaleX(0.9117);transform-origin:0 0;">-11</div>
<div class="a" style="left:524px;top:135px;width:5px;height:1px;background:#a8a8a8;"></div>
<div class="a" style="left:524px;top:127px;width:5px;height:1px;background:#a8a8a8;"></div>
<div class="a" style="left:524px;top:122px;width:5px;height:1px;background:#a8a8a8;"></div>
<div class="a" style="left:524px;top:118px;width:5px;height:1px;background:#a8a8a8;"></div>
<div class="a" style="left:524px;top:114px;width:5px;height:1px;background:#a8a8a8;"></div>
<div class="a" style="left:524px;top:111px;width:5px;height:1px;background:#a8a8a8;"></div>
<div class="a" style="left:524px;top:179px;width:5px;height:1px;background:#a8a8a8;"></div>
<div class="a" style="left:524px;top:172px;width:5px;height:1px;background:#a8a8a8;"></div>
<div class="a" style="left:524px;top:166px;width:5px;height:1px;background:#a8a8a8;"></div>
<div class="a" style="left:524px;top:162px;width:5px;height:1px;background:#a8a8a8;"></div>
<div class="a" style="left:524px;top:158px;width:5px;height:1px;background:#a8a8a8;"></div>
<div class="a" style="left:524px;top:155px;width:5px;height:1px;background:#a8a8a8;"></div>
<div class="a" style="left:524px;top:153px;width:5px;height:1px;background:#a8a8a8;"></div>
<div class="a" style="left:524px;top:151px;width:5px;height:1px;background:#a8a8a8;"></div>
<div class="a" style="left:524px;top:224px;width:5px;height:1px;background:#a8a8a8;"></div>
<div class="a" style="left:524px;top:216px;width:5px;height:1px;background:#a8a8a8;"></div>
<div class="a" style="left:524px;top:210px;width:5px;height:1px;background:#a8a8a8;"></div>
<div class="a" style="left:524px;top:206px;width:5px;height:1px;background:#a8a8a8;"></div>
<div class="a" style="left:524px;top:203px;width:5px;height:1px;background:#a8a8a8;"></div>
<div class="a" style="left:524px;top:200px;width:5px;height:1px;background:#a8a8a8;"></div>
<div class="a" style="left:524px;top:197px;width:5px;height:1px;background:#a8a8a8;"></div>
<div class="a" style="left:524px;top:195px;width:5px;height:1px;background:#a8a8a8;"></div>
<div class="a" style="left:524px;top:268px;width:5px;height:1px;background:#a8a8a8;"></div>
<div class="a" style="left:524px;top:260px;width:5px;height:1px;background:#a8a8a8;"></div>
<div class="a" style="left:524px;top:254px;width:5px;height:1px;background:#a8a8a8;"></div>
<div class="a" style="left:524px;top:250px;width:5px;height:1px;background:#a8a8a8;"></div>
<div class="a" style="left:524px;top:247px;width:5px;height:1px;background:#a8a8a8;"></div>
<div class="a" style="left:524px;top:244px;width:5px;height:1px;background:#a8a8a8;"></div>
<div class="a" style="left:524px;top:241px;width:5px;height:1px;background:#a8a8a8;"></div>
<div class="a" style="left:524px;top:239px;width:5px;height:1px;background:#a8a8a8;"></div>
<div class="a" style="left:524px;top:312px;width:5px;height:1px;background:#a8a8a8;"></div>
<div class="a" style="left:524px;top:304px;width:5px;height:1px;background:#a8a8a8;"></div>
<div class="a" style="left:524px;top:299px;width:5px;height:1px;background:#a8a8a8;"></div>
<div class="a" style="left:524px;top:294px;width:5px;height:1px;background:#a8a8a8;"></div>
<div class="a" style="left:524px;top:291px;width:5px;height:1px;background:#a8a8a8;"></div>
<div class="a" style="left:524px;top:288px;width:5px;height:1px;background:#a8a8a8;"></div>
<div class="a" style="left:524px;top:285px;width:5px;height:1px;background:#a8a8a8;"></div>
<div class="a" style="left:524px;top:283px;width:5px;height:1px;background:#a8a8a8;"></div>
<div class="a" style="left:524px;top:332px;width:5px;height:1px;background:#a8a8a8;"></div>
<div class="a" style="left:524px;top:330px;width:5px;height:1px;background:#a8a8a8;"></div>
<div class="a" style="left:524px;top:327px;width:5px;height:1px;background:#a8a8a8;"></div>
<div class="t" style="left:479.8px;top:221.8px;font-size:10px;color:#303030;font-family:'Liberation Sans',sans-serif;transform:translate(-50%,-50%) rotate(-90deg);transform-origin:center">Pressure mbar</div>
<div class="a" style="left:550px;top:293.5px;width:44px;height:40.5px;background:#2f4098;"></div>
<div class="a" style="left:636.25px;top:213.75px;width:43.75px;height:120.25px;background:#2f4098;"></div>
<div class="a" style="left:722px;top:318.5px;width:44px;height:15.5px;background:#2f4098;"></div>
<div class="a" style="left:573px;top:335px;width:1px;height:4px;background:#404040;"></div>
<div class="a" style="left:659px;top:335px;width:1px;height:4px;background:#404040;"></div>
<div class="a" style="left:744px;top:335px;width:1px;height:4px;background:#404040;"></div>
<div class="a" style="left:529px;top:335px;width:1px;height:2px;background:#b0b0b0;"></div>
<div class="a" style="left:551px;top:335px;width:1px;height:2px;background:#b0b0b0;"></div>
<div class="a" style="left:594px;top:335px;width:1px;height:2px;background:#b0b0b0;"></div>
<div class="a" style="left:616px;top:335px;width:1px;height:2px;background:#b0b0b0;"></div>
<div class="a" style="left:637px;top:335px;width:1px;height:2px;background:#b0b0b0;"></div>
<div class="a" style="left:680px;top:335px;width:1px;height:2px;background:#b0b0b0;"></div>
<div class="a" style="left:701px;top:335px;width:1px;height:2px;background:#b0b0b0;"></div>
<div class="a" style="left:722px;top:335px;width:1px;height:2px;background:#b0b0b0;"></div>
<div class="a" style="left:766px;top:335px;width:1px;height:2px;background:#b0b0b0;"></div>
<div class="a" style="left:787px;top:335px;width:1px;height:2px;background:#b0b0b0;"></div>
<div class="a" style="left:550px;top:345px;width:44px;height:3px;background:#2f4098;"></div>
<div class="t" id="t501" style="left:567px;top:350.78px;font-size:9px;font-weight:normal;color:#303030;font-family:'Liberation Sans',sans-serif;transform:scaleX(1.0484);transform-origin:0 0;">39</div>
<div class="t" id="t502" style="left:653px;top:350.78px;font-size:9px;font-weight:normal;color:#303030;font-family:'Liberation Sans',sans-serif;">40</div>
<div class="t" id="t503" style="left:738.8px;top:350.78px;font-size:9px;font-weight:normal;color:#303030;font-family:'Liberation Sans',sans-serif;transform:scaleX(0.8986);transform-origin:0 0;">41</div>
<div class="t" id="t504" style="left:644px;top:362.98px;font-size:9px;font-weight:normal;color:#303030;font-family:'Liberation Sans',sans-serif;">Scan 3</div>
<div class="a" style="left:658px;top:112px;width:1px;height:102px;background:#303030;"></div>
<div class="a" style="left:658px;top:214px;width:1px;height:120px;background:#d8d8a8;"></div>
<svg class="a" style="left:655px;top:335px" width="8" height="11" viewBox="0 0 8 11"><path d="M2.5 1 H4.5 L5 6 L6.5 8 V9.5 H0.5 V8 L2 6Z" fill="#fff" stroke="#303030" stroke-width="0.9"/></svg>
<div class="a" style="left:658px;top:112px;width:55px;height:26px;background:#f8f6f0;border:1px solid #606060;border-left:1px solid #202020"></div>
<div class="t" id="t509" style="left:667.75px;top:114.53px;font-size:9.3px;font-weight:normal;color:#202020;font-family:'Liberation Sans',sans-serif;transform:scaleX(0.9048);transform-origin:0 0;letter-spacing:0.6px;">Mass 40</div>
<div class="t" id="t510" style="left:664.6px;top:126.53px;font-size:9.3px;font-weight:normal;color:#202020;font-family:'Liberation Sans',sans-serif;transform:scaleX(0.8968);transform-origin:0 0;letter-spacing:0.6px;">3.23e-009</div>
<div class="a" style="left:474px;top:372px;width:319px;height:12px;background:#ecebeb;"></div>
<div class="a" style="left:474px;top:372px;width:12px;height:12px;background:#d4d0d2;"></div>
<div class="a" style="left:474px;top:372px;width:12px;height:1px;background:#ffffff;"></div>
<div class="a" style="left:474px;top:372px;width:1px;height:12px;background:#ffffff;"></div>
<div class="a" style="left:474px;top:383px;width:12px;height:1px;background:#404040;"></div>
<div class="a" style="left:485px;top:372px;width:1px;height:12px;background:#404040;"></div>
<div class="a" style="left:781px;top:372px;width:12px;height:12px;background:#d4d0d2;"></div>
<div class="a" style="left:781px;top:372px;width:12px;height:1px;background:#ffffff;"></div>
<div class="a" style="left:781px;top:372px;width:1px;height:12px;background:#ffffff;"></div>
<div class="a" style="left:781px;top:383px;width:12px;height:1px;background:#404040;"></div>
<div class="a" style="left:792px;top:372px;width:1px;height:12px;background:#404040;"></div>
<div class="a" style="left:683px;top:372px;width:97px;height:12px;background:#d4d0d2;"></div>
<div class="a" style="left:683px;top:372px;width:97px;height:1px;background:#ffffff;"></div>
<div class="a" style="left:683px;top:372px;width:1px;height:12px;background:#ffffff;"></div>
<div class="a" style="left:683px;top:383px;width:97px;height:1px;background:#404040;"></div>
<div class="a" style="left:779px;top:372px;width:1px;height:12px;background:#404040;"></div>
<svg class="a" style="left:474px;top:372px" width="12" height="12" viewBox="0 0 12 12"><path d="M7.5 3 V9 L4.5 6Z" fill="#000"/></svg>
<svg class="a" style="left:781px;top:372px" width="12" height="12" viewBox="0 0 12 12"><path d="M4.5 3 V9 L7.5 6Z" fill="#000"/></svg>
<div class="a" style="left:0px;top:389px;width:800px;height:174px;background:#d4d0d2;"></div>
<div class="a" style="left:0px;top:390px;width:800px;height:1px;background:#ffffff;"></div>
<div class="a" style="left:0px;top:393px;width:800px;height:1px;background:#505050;"></div>
<div class="a" style="left:0px;top:395px;width:800px;height:1px;background:#f4f4f4;"></div>
<div class="a" style="left:3px;top:398px;width:10px;height:9px;background:#d4d0d2;"></div>
<div class="a" style="left:3px;top:398px;width:10px;height:1px;background:#ffffff;"></div>
<div class="a" style="left:3px;top:398px;width:1px;height:9px;background:#ffffff;"></div>
<div class="a" style="left:3px;top:406px;width:10px;height:1px;background:#404040;"></div>
<div class="a" style="left:12px;top:398px;width:1px;height:9px;background:#404040;"></div>
<svg class="a" style="left:3px;top:398px" width="10" height="9" viewBox="0 0 10 9"><path d="M4.5 2.5 V6.5 L6.5 4.5Z" fill="#909090"/></svg>
<div class="a" style="left:5px;top:408px;width:1px;height:151px;background:#ffffff;"></div>
<div class="a" style="left:6px;top:408px;width:1px;height:151px;background:#a0a0a0;"></div>
<div class="a" style="left:8px;top:408px;width:1px;height:151px;background:#ffffff;"></div>
<div class="a" style="left:9px;top:408px;width:1px;height:151px;background:#a0a0a0;"></div>
<div class="a" style="left:15px;top:398px;width:782px;height:148px;background:#404040;"></div>
<div class="a" style="left:16px;top:399px;width:780px;height:146px;background:#fff;"></div>
<div class="a" style="left:16px;top:399px;width:780px;height:25px;background:#16487e;"></div>
<div class="a" style="left:16px;top:399px;width:131px;height:146px;background:#16487e;"></div>
<svg class="a" style="left:147px;top:424px" width="13" height="13" viewBox="0 0 13 13"><path d="M0 0 H13 A13 13 0 0 0 0 13Z" fill="#16487e"/></svg>
<div class="a" style="left:796px;top:398px;width:1px;height:148px;background:#f0f0f0;"></div>
<div class="a" style="left:780px;top:405px;width:14px;height:13px;background:#dfe6ee;"></div>
<div class="a" style="left:780px;top:405px;width:14px;height:1px;background:#fff;"></div>
<div class="a" style="left:780px;top:405px;width:1px;height:13px;background:#fff;"></div>
<div class="a" style="left:780px;top:417px;width:14px;height:1px;background:#c0c8d0;"></div>
<div class="a" style="left:793px;top:405px;width:1px;height:13px;background:#c0c8d0;"></div>
<svg class="a" style="left:780px;top:405px" width="14" height="13" viewBox="0 0 14 13"><path d="M4 3.5 L10 9.5 M10 3.5 L4 9.5" stroke="#000" stroke-width="2"/></svg>
<div class="t" id="t555" style="left:18px;top:403.81px;font-size:10.5px;font-weight:bold;color:#f0e448;font-family:'Liberation Sans',sans-serif;transform:scaleX(1.0398);transform-origin:0 0;letter-spacing:1.2px;-webkit-text-stroke:0.3px #f0e448;">Recipe</div>
<div class="a" style="left:18px;top:413.5px;width:44px;height:1px;background:#d8d080;"></div>
<div class="a" style="left:37px;top:416px;width:30px;height:11px;background:#d8dce8;"></div>
<div class="t" id="t558" style="left:38px;top:418.20px;font-size:8.5px;font-weight:bold;color:#18244c;font-family:'Liberation Sans',sans-serif;transform:scaleX(0.9096);transform-origin:0 0;letter-spacing:0.8px;-webkit-text-stroke:0.3px #18244c;">Status</div>
<div class="t" id="t559" style="left:18px;top:430.11px;font-size:10.5px;font-weight:bold;color:#f0e448;font-family:'Liberation Sans',sans-serif;transform:scaleX(1.0104);transform-origin:0 0;letter-spacing:0.6px;-webkit-text-stroke:0.3px #f0e448;">Instruments</div>
<div class="a" style="left:18px;top:440.5px;width:68px;height:1px;background:#d8d080;"></div>
<div class="a" style="left:18px;top:448px;width:3px;height:1px;background:#c0d0e0;"></div>
<svg class="a" style="left:23px;top:444px" width="14" height="9" viewBox="0 0 14 9"><rect x="0" y="0.5" width="10" height="8" fill="#000"/><rect x="2" y="2.5" width="7" height="1.5" fill="#fff"/><rect x="2" y="5" width="7" height="1.5" fill="#fff"/><rect x="11" y="2" width="2" height="5" fill="#fff"/></svg>
<div class="t" id="t563" style="left:41px;top:443.48px;font-size:9px;font-weight:bold;color:#dce4f0;font-family:'Liberation Sans',sans-serif;transform:scaleX(0.8506);transform-origin:0 0;letter-spacing:0.9px;">Mini-Lab</div>
<div class="t" id="t564" style="left:40px;top:454.63px;font-size:8px;font-weight:normal;color:#dce4f0;font-family:'Liberation Sans',sans-serif;transform:scaleX(1.0295);transform-origin:0 0;">LM76-00701004</div>
<div class="t" id="t565" style="left:40px;top:464.83px;font-size:8px;font-weight:normal;color:#dce4f0;font-family:'Liberation Sans',sans-serif;transform:scaleX(0.9129);transform-origin:0 0;">Filament No: 1</div>
<div class="t" id="t566" style="left:40px;top:475.03px;font-size:8px;font-weight:normal;color:#dce4f0;font-family:'Liberation Sans',sans-serif;transform:scaleX(0.9363);transform-origin:0 0;">Filament Status: On</div>
<div class="t" id="t567" style="left:40px;top:485.23px;font-size:8px;font-weight:normal;color:#dce4f0;font-family:'Liberation Sans',sans-serif;transform:scaleX(0.9544);transform-origin:0 0;">Status: Zeroing BarChart1</div>
<div class="t" id="t568" style="left:150px;top:405.43px;font-size:14.5px;font-weight:normal;color:#f2e23a;font-family:'Liberation Sans',sans-serif;transform:scaleX(1.0764);transform-origin:0 0;-webkit-text-stroke:0.5px #f2e23a;">Recipe Information</div>
<div class="t" id="t569" style="left:160px;top:428.13px;font-size:10px;font-weight:bold;color:#1c3a6c;font-family:'Liberation Sans',sans-serif;transform:scaleX(1.0262);transform-origin:0 0;-webkit-text-stroke:0.5px #1c3a6c;letter-spacing:0.6px;">Alarms</div>
<div class="a" style="left:150px;top:443px;width:618px;height:50px;background:#fff;"></div>
<div class="a" style="left:151px;top:444px;width:616px;height:12px;background:#d4d4d4;"></div>
<div class="a" style="left:150px;top:443px;width:618px;height:1px;background:#a8a8a8;"></div>
<div class="a" style="left:150px;top:456px;width:618px;height:1px;background:#a8a8a8;"></div>
<div class="a" style="left:150px;top:469px;width:618px;height:1px;background:#a8a8a8;"></div>
<div class="a" style="left:150px;top:492px;width:618px;height:1px;background:#a8a8a8;"></div>
<div class="a" style="left:150px;top:443px;width:1px;height:50px;background:#a8a8a8;"></div>
<div class="a" style="left:194px;top:443px;width:1px;height:50px;background:#a8a8a8;"></div>
<div class="a" style="left:214px;top:443px;width:1px;height:50px;background:#a8a8a8;"></div>
<div class="a" style="left:380px;top:443px;width:1px;height:50px;background:#a8a8a8;"></div>
<div class="a" style="left:570px;top:443px;width:1px;height:50px;background:#a8a8a8;"></div>
<div class="a" style="left:669px;top:443px;width:1px;height:50px;background:#a8a8a8;"></div>
<div class="a" style="left:767px;top:443px;width:1px;height:50px;background:#a8a8a8;"></div>
<div class="t" id="t583" style="left:152.25px;top:447.06px;font-size:8.2px;font-weight:bold;color:#101010;font-family:'Liberation Sans',sans-serif;letter-spacing:0.7px;-webkit-text-stroke:0.25px #101010;">Category</div>
<div class="t" id="t584" style="left:195.6px;top:447.06px;font-size:8.2px;font-weight:bold;color:#101010;font-family:'Liberation Sans',sans-serif;transform:scaleX(1.0219);transform-origin:0 0;letter-spacing:0.7px;-webkit-text-stroke:0.25px #101010;">Ack</div>
<div class="t" id="t585" style="left:273px;top:447.06px;font-size:8.2px;font-weight:bold;color:#101010;font-family:'Liberation Sans',sans-serif;transform:scaleX(1.0418);transform-origin:0 0;letter-spacing:0.7px;-webkit-text-stroke:0.25px #101010;">EventText</div>
<div class="t" id="t586" style="left:453.25px;top:447.06px;font-size:8.2px;font-weight:bold;color:#101010;font-family:'Liberation Sans',sans-serif;transform:scaleX(1.0613);transform-origin:0 0;letter-spacing:0.7px;-webkit-text-stroke:0.25px #101010;">UserText</div>
<div class="t" id="t587" style="left:596.6px;top:447.06px;font-size:8.2px;font-weight:bold;color:#101010;font-family:'Liberation Sans',sans-serif;transform:scaleX(1.0473);transform-origin:0 0;letter-spacing:0.7px;-webkit-text-stroke:0.25px #101010;">StartTime</div>
<div class="t" id="t588" style="left:697.75px;top:447.06px;font-size:8.2px;font-weight:bold;color:#101010;font-family:'Liberation Sans',sans-serif;transform:scaleX(1.0069);transform-origin:0 0;letter-spacing:0.7px;-webkit-text-stroke:0.25px #101010;">EndTime</div>
<svg class="a" style="left:167px;top:456.75px" width="11" height="11" viewBox="0 0 11 11"><circle cx="5.5" cy="5.5" r="5.3" fill="#2a3070"/><rect x="4.6" y="4.5" width="1.9" height="4.5" fill="#fff"/><circle cx="5.5" cy="2.8" r="1" fill="#fff"/></svg>
<svg class="a" style="left:167px;top:474.75px" width="11" height="11" viewBox="0 0 11 11"><circle cx="5.5" cy="5.5" r="5.3" fill="#2a3070"/><rect x="4.6" y="4.5" width="1.9" height="4.5" fill="#fff"/><circle cx="5.5" cy="2.8" r="1" fill="#fff"/></svg>
<div class="t" id="t591" style="left:277px;top:458.76px;font-size:9.5px;font-weight:normal;color:#000;font-family:'Liberation Sans',sans-serif;transform:scaleX(0.8520);transform-origin:0 0;">Calibration</div>
<div class="t" id="t592" style="left:277px;top:476.06px;font-size:9.5px;font-weight:normal;color:#000;font-family:'Liberation Sans',sans-serif;transform:scaleX(0.8520);transform-origin:0 0;">Calibration</div>
<div class="t" id="t593" style="left:398px;top:457.96px;font-size:9.5px;font-weight:normal;color:#000;font-family:'Liberation Sans',sans-serif;transform:scaleX(0.8806);transform-origin:0 0;">Connected to Mini-Lab (LM76-00701004)</div>
<div class="t" id="t594" style="left:384.5px;top:469.86px;font-size:9.5px;font-weight:normal;color:#000;font-family:'Liberation Sans',sans-serif;transform:scaleX(0.8878);transform-origin:0 0;">Starting calibration of Source: Standard Electron</div>
<div class="t" id="t595" style="left:423.75px;top:481.11px;font-size:9.5px;font-weight:normal;color:#000;font-family:'Liberation Sans',sans-serif;transform:scaleX(0.8877);transform-origin:0 0;">Energy / Detector: Faraday</div>
<div class="t" id="t596" style="left:582.8px;top:458.36px;font-size:9.5px;font-weight:normal;color:#000;font-family:'Liberation Sans',sans-serif;transform:scaleX(0.8767);transform-origin:0 0;">6/29/01 4:58:18 PM</div>
<div class="t" id="t597" style="left:582.8px;top:475.86px;font-size:9.5px;font-weight:normal;color:#000;font-family:'Liberation Sans',sans-serif;transform:scaleX(0.8767);transform-origin:0 0;">6/29/01 4:58:18 PM</div>
<div class="t" id="t598" style="left:683.4px;top:458.36px;font-size:9.5px;font-weight:normal;color:#000;font-family:'Liberation Sans',sans-serif;transform:scaleX(0.8794);transform-origin:0 0;">No Time Specified</div>
<div class="t" id="t599" style="left:683.4px;top:475.86px;font-size:9.5px;font-weight:normal;color:#000;font-family:'Liberation Sans',sans-serif;transform:scaleX(0.8794);transform-origin:0 0;">No Time Specified</div>
<div class="a" style="left:768px;top:442px;width:13px;height:103px;background:#e8e8e8;"></div>
<div class="a" style="left:768px;top:442px;width:13px;height:13px;background:#d4d0d2;"></div>
<div class="a" style="left:768px;top:442px;width:13px;height:1px;background:#ffffff;"></div>
<div class="a" style="left:768px;top:442px;width:1px;height:13px;background:#ffffff;"></div>
<div class="a" style="left:768px;top:454px;width:13px;height:1px;background:#404040;"></div>
<div class="a" style="left:780px;top:442px;width:1px;height:13px;background:#404040;"></div>
<svg class="a" style="left:768px;top:442px" width="13" height="13" viewBox="0 0 13 13"><path d="M3 8 H10 L6.5 4.5Z" fill="#000"/></svg>
<div class="a" style="left:768px;top:533px;width:13px;height:11px;background:#d4d0d2;"></div>
<div class="a" style="left:768px;top:533px;width:13px;height:1px;background:#ffffff;"></div>
<div class="a" style="left:768px;top:533px;width:1px;height:11px;background:#ffffff;"></div>
<div class="a" style="left:768px;top:543px;width:13px;height:1px;background:#404040;"></div>
<div class="a" style="left:780px;top:533px;width:1px;height:11px;background:#404040;"></div>
<svg class="a" style="left:768px;top:533px" width="13" height="11" viewBox="0 0 13 11"><path d="M3.5 4 H9.5 L6.5 7Z" fill="#000"/></svg>
<div class="a" style="left:156px;top:531.5px;width:9px;height:9px;background:#fff;border:1px solid #404040"></div>
<svg class="a" style="left:156px;top:531.5px" width="9" height="9" viewBox="0 0 9 9"><path d="M2 4 L4 6.5 L7.5 2" stroke="#000" stroke-width="1.5" fill="none"/></svg>
<div class="t" id="t615" style="left:168px;top:533.80px;font-size:8.5px;font-weight:bold;color:#000;font-family:'Liberation Sans',sans-serif;transform:scaleX(1.0743);transform-origin:0 0;">Always Show latest Alarm(s)</div>
<div class="a" style="left:304px;top:530.5px;width:10px;height:9px;background:#c8c8c8;"></div>
<div class="a" style="left:304px;top:530.5px;width:10px;height:1px;background:#f0f0f0;"></div>
<div class="a" style="left:304px;top:530.5px;width:1px;height:9px;background:#f0f0f0;"></div>
<div class="a" style="left:304px;top:538.5px;width:10px;height:1px;background:#606060;"></div>
<div class="a" style="left:313px;top:530.5px;width:1px;height:9px;background:#606060;"></div>
<div class="t" id="t621" style="left:317px;top:533.20px;font-size:8.5px;font-weight:bold;color:#000;font-family:'Liberation Sans',sans-serif;transform:scaleX(0.9692);transform-origin:0 0;letter-spacing:0.8px;">Acknowledge All</div>
<div class="t" id="t622" style="left:678px;top:533.00px;font-size:8.5px;font-weight:bold;color:#000;font-family:'Liberation Sans',sans-serif;transform:scaleX(0.9567);transform-origin:0 0;letter-spacing:0.8px;">Records 1 to 2 of 2</div>
<div class="a" style="left:15px;top:545px;width:782px;height:14px;background:#d4d0d2;"></div>
<div class="a" style="left:197px;top:546px;width:599px;height:1px;background:#202020;"></div>
<div class="a" style="left:15px;top:546px;width:13px;height:12px;background:#d4d0d2;"></div>
<div class="a" style="left:15px;top:546px;width:13px;height:1px;background:#ffffff;"></div>
<div class="a" style="left:15px;top:546px;width:1px;height:12px;background:#ffffff;"></div>
<div class="a" style="left:15px;top:557px;width:13px;height:1px;background:#808080;"></div>
<div class="a" style="left:27px;top:546px;width:1px;height:12px;background:#808080;"></div>
<div class="a" style="left:29px;top:546px;width:13px;height:12px;background:#d4d0d2;"></div>
<div class="a" style="left:29px;top:546px;width:13px;height:1px;background:#ffffff;"></div>
<div class="a" style="left:29px;top:546px;width:1px;height:12px;background:#ffffff;"></div>
<div class="a" style="left:29px;top:557px;width:13px;height:1px;background:#808080;"></div>
<div class="a" style="left:41px;top:546px;width:1px;height:12px;background:#808080;"></div>
<div class="a" style="left:42px;top:546px;width:13px;height:12px;background:#d4d0d2;"></div>
<div class="a" style="left:42px;top:546px;width:13px;height:1px;background:#ffffff;"></div>
<div class="a" style="left:42px;top:546px;width:1px;height:12px;background:#ffffff;"></div>
<div class="a" style="left:42px;top:557px;width:13px;height:1px;background:#808080;"></div>
<div class="a" style="left:54px;top:546px;width:1px;height:12px;background:#808080;"></div>
<div class="a" style="left:55px;top:546px;width:13px;height:12px;background:#d4d0d2;"></div>
<div class="a" style="left:55px;top:546px;width:13px;height:1px;background:#ffffff;"></div>
<div class="a" style="left:55px;top:546px;width:1px;height:12px;background:#ffffff;"></div>
<div class="a" style="left:55px;top:557px;width:13px;height:1px;background:#808080;"></div>
<div class="a" style="left:67px;top:546px;width:1px;height:12px;background:#808080;"></div>
<svg class="a" style="left:15px;top:546px" width="53" height="12" viewBox="0 0 53 12"><g fill="#a8a8a8"><rect x="4" y="3" width="1.5" height="6"/><path d="M9 3 V9 L6 6Z"/><path d="M22 3 V9 L18 6Z"/><path d="M31 3 V9 L35 6Z"/><path d="M44 3 V9 L47 6Z"/><rect x="47.5" y="3" width="1.5" height="6"/></g></svg>
<svg class="a" style="left:66px;top:545px" width="135" height="15" viewBox="0 0 135 15"><path d="M2.5 1.5 H36 L40.5 13 H8 Z" fill="#d0cccc"/><path d="M2.5 1 V13 M2.5 1.5 H36 M3.5 2 L8 12.5 M35.5 1.5 L40.5 12.5" fill="none" stroke="#202020" stroke-width="1"/><path d="M34 13 L37.5 4 L41 12.5 H126.5 L131 1.5 L134 1.5" fill="none" stroke="#202020" stroke-width="1"/><path d="M36 13 L38 7 L41 13Z M41 13 H126 L130.5 1 H37 Z" fill="#fff"/></svg>
<div class="t" id="t647" style="left:76px;top:546.93px;font-size:10px;font-weight:normal;color:#202020;font-family:'Liberation Sans',sans-serif;transform:scaleX(0.9222);transform-origin:0 0;">Main</div>
<div class="t" id="t648" style="left:109px;top:546.93px;font-size:10px;font-weight:bold;color:#000;font-family:'Liberation Sans',sans-serif;transform:scaleX(0.9110);transform-origin:0 0;">Calibration Recipe</div>
<div class="a" style="left:0px;top:559px;width:800px;height:1px;background:#ffffff;"></div>
<div class="a" style="left:0px;top:562px;width:800px;height:18px;background:#d4d0d2;"></div>
<div class="a" style="left:0px;top:562px;width:800px;height:1px;background:#ffffff;"></div>
<div class="t" id="t652" style="left:2px;top:566.50px;font-size:9.8px;font-weight:normal;color:#101010;font-family:'Liberation Sans',sans-serif;transform:scaleX(0.8539);transform-origin:0 0;">Done</div>
<div class="a" style="left:647px;top:565px;width:78px;height:1px;background:#a0a0a0;"></div>
<div class="a" style="left:647px;top:565px;width:1px;height:14px;background:#a0a0a0;"></div>
<div class="a" style="left:647px;top:578px;width:78px;height:1px;background:#ffffff;"></div>
<div class="a" style="left:724px;top:565px;width:1px;height:14px;background:#ffffff;"></div>
<div class="a" style="left:726px;top:565px;width:19px;height:1px;background:#a0a0a0;"></div>
<div class="a" style="left:726px;top:565px;width:1px;height:14px;background:#a0a0a0;"></div>
<div class="a" style="left:726px;top:578px;width:19px;height:1px;background:#ffffff;"></div>
<div class="a" style="left:744px;top:565px;width:1px;height:14px;background:#ffffff;"></div>
<div class="a" style="left:747px;top:565px;width:24px;height:1px;background:#a0a0a0;"></div>
<div class="a" style="left:747px;top:565px;width:1px;height:14px;background:#a0a0a0;"></div>
<div class="a" style="left:747px;top:578px;width:24px;height:1px;background:#ffffff;"></div>
<div class="a" style="left:770px;top:565px;width:1px;height:14px;background:#ffffff;"></div>
<div class="a" style="left:773px;top:565px;width:27px;height:1px;background:#a0a0a0;"></div>
<div class="a" style="left:773px;top:565px;width:1px;height:14px;background:#a0a0a0;"></div>
<div class="a" style="left:773px;top:578px;width:27px;height:1px;background:#ffffff;"></div>
<div class="a" style="left:799px;top:565px;width:1px;height:14px;background:#ffffff;"></div>
<div class="t" id="t669" style="left:648.8px;top:566.50px;font-size:9.8px;font-weight:normal;color:#101010;font-family:'Liberation Sans',sans-serif;transform:scaleX(0.8178);transform-origin:0 0;">Pressure in mbar</div>
<div class="a" style="left:0px;top:580px;width:800px;height:20px;background:#fff;"></div>
</body></html>
